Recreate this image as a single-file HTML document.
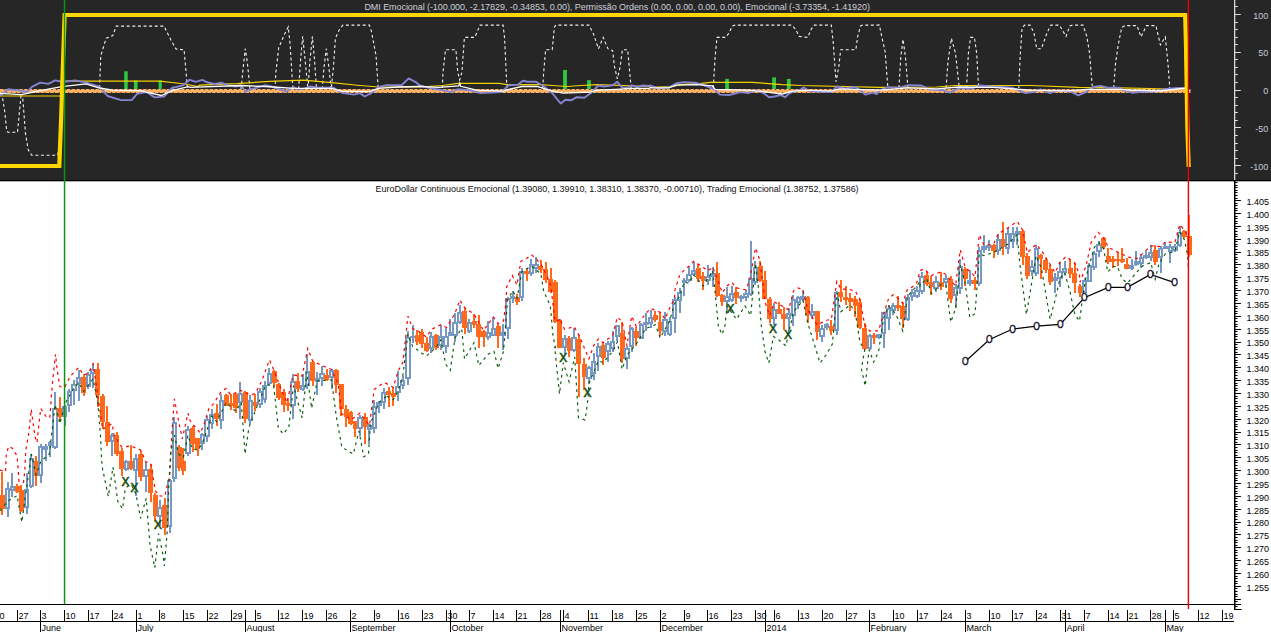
<!DOCTYPE html><html><head><meta charset="utf-8"><title>EuroDollar Continuous Emocional</title>
<style>html,body{margin:0;padding:0;background:#fff;overflow:hidden}svg{display:block}text{font-family:"Liberation Sans",Arial,sans-serif;font-size:9px}</style></head><body>
<svg width="1271" height="632" viewBox="0 0 1271 632">
<rect x="0" y="0" width="1271" height="632" fill="#ffffff"/>
<rect x="0" y="0" width="1271" height="180" fill="#262626"/>
<rect x="0" y="180" width="1271" height="1.3" fill="#000"/>
<polyline points="0.0,93.3 2.7,98.7 4.8,112.0 6.7,131.0 8.0,132.3 17.5,132.3 19.4,112.0 21.0,96.0 22.8,98.7 25.5,133.7 28.2,149.8 31.7,155.2 57.8,155.2 60.5,128.3 62.4,90.6" fill="none" stroke="#f0f0f0" stroke-width="1.1" stroke-dasharray="3 2.6"/>
<polyline points="99.5,88.0 100.8,55.7 106.2,38.2 112.9,35.5 116.1,26.1 164.0,26.1 170.7,39.6 176.0,49.0 184.1,49.8 186.0,71.8 187.4,88.0" fill="none" stroke="#f0f0f0" stroke-width="1.1" stroke-dasharray="3 2.6"/>
<polyline points="241.0,89.3 242.9,70.4 245.3,48.7 247.6,64.8 250.0,89.3" fill="none" stroke="#f0f0f0" stroke-width="1.1" stroke-dasharray="3 2.6"/>
<polyline points="275.0,89.3 275.9,72.3 278.7,47.8 284.4,34.5 288.2,27.0 290.1,44.0 292.9,89.3" fill="none" stroke="#f0f0f0" stroke-width="1.1" stroke-dasharray="3 2.6"/>
<polyline points="298.6,89.3 300.5,61.0 302.7,36.4 305.2,61.0 308.0,89.3 309.9,61.0 312.4,36.4 314.6,61.0 316.5,89.3" fill="none" stroke="#f0f0f0" stroke-width="1.1" stroke-dasharray="3 2.6"/>
<polyline points="322.2,89.3 324.1,66.6 326.3,48.7 328.8,66.6 331.2,89.3 333.5,66.6 335.4,38.3 340.1,28.0 343.0,25.1 369.4,25.1 371.3,30.8 376.0,55.3 378.3,89.3" fill="none" stroke="#f0f0f0" stroke-width="1.1" stroke-dasharray="3 2.6"/>
<polyline points="442.3,88.0 443.0,72.3 445.5,49.7 455.9,49.7 457.8,72.3 459.7,79.9 461.9,72.3 464.4,37.4 474.8,37.4 480.0,25.1 503.1,25.1 504.6,38.3 506.9,88.0" fill="none" stroke="#f0f0f0" stroke-width="1.1" stroke-dasharray="3 2.6"/>
<polyline points="542.7,88.0 543.7,72.3 545.6,49.7 552.2,49.7 554.4,27.0 556.0,25.1 589.0,25.1 593.7,34.5 598.4,48.7 603.2,37.4 607.9,48.7 612.6,50.6 614.5,66.6 617.3,78.9 620.2,66.6 622.4,49.7 627.7,49.7 629.2,66.6 631.1,88.0" fill="none" stroke="#f0f0f0" stroke-width="1.1" stroke-dasharray="3 2.6"/>
<polyline points="713.3,88.0 715.1,57.2 717.0,37.4 725.5,37.4 729.3,32.7 732.1,26.0 735.0,25.1 791.6,25.1 795.4,28.9 799.2,36.4 807.7,37.4 811.4,28.9 814.3,25.1 831.3,25.1 833.2,42.1 836.0,81.8 838.8,66.6 840.7,49.7 855.8,49.7 857.7,36.4 860.5,26.0 862.4,25.1 879.4,25.1 881.3,34.5 885.1,51.5 887.9,88.0" fill="none" stroke="#f0f0f0" stroke-width="1.1" stroke-dasharray="3 2.6"/>
<polyline points="898.9,88.0 900.8,57.2 903.0,39.3 905.5,57.2 907.9,88.0" fill="none" stroke="#f0f0f0" stroke-width="1.1" stroke-dasharray="3 2.6"/>
<polyline points="946.1,88.0 948.0,61.0 951.4,38.3 955.5,53.4 959.3,88.0" fill="none" stroke="#f0f0f0" stroke-width="1.1" stroke-dasharray="3 2.6"/>
<polyline points="966.5,88.0 968.4,53.4 970.6,37.4 974.4,37.4 976.7,53.4 978.6,88.0" fill="none" stroke="#f0f0f0" stroke-width="1.1" stroke-dasharray="3 2.6"/>
<polyline points="1018.8,88.0 1020.1,57.2 1022.0,28.9 1024.4,25.1 1030.1,25.1 1033.9,32.7 1036.7,48.7 1041.4,48.7 1047.1,32.7 1050.9,25.1 1059.4,25.1 1066.0,36.4 1069.8,26.0 1072.6,25.1 1083.0,25.1 1086.8,36.4 1089.6,53.4 1092.4,88.0" fill="none" stroke="#f0f0f0" stroke-width="1.1" stroke-dasharray="3 2.6"/>
<polyline points="1113.7,88.0 1115.5,63.8 1118.2,44.9 1121.7,27.5 1125.0,25.6 1137.0,25.6 1141.0,36.9 1146.5,25.6 1155.9,25.6 1160.4,44.9 1165.3,36.9 1168.0,63.8 1169.8,88.0" fill="none" stroke="#f0f0f0" stroke-width="1.1" stroke-dasharray="3 2.6"/>
<rect x="124.2" y="71.3" width="3.5" height="19.3" fill="#2fc93f"/>
<rect x="133.9" y="80.4" width="3.7" height="10.2" fill="#2fc93f"/>
<rect x="158.6" y="80.4" width="3.2" height="10.2" fill="#2fc93f"/>
<rect x="563.1" y="70.0" width="3.8" height="20.6" fill="#2fc93f"/>
<rect x="587.1" y="80.2" width="3.8" height="10.4" fill="#2fc93f"/>
<rect x="725.2" y="78.9" width="3.7" height="11.7" fill="#2fc93f"/>
<rect x="772.2" y="77.4" width="3.8" height="13.2" fill="#2fc93f"/>
<rect x="786.9" y="78.9" width="3.8" height="11.7" fill="#2fc93f"/>
<line x1="0" y1="91.1" x2="1190.5" y2="91.1" stroke="#ffb264" stroke-width="4"/>
<line x1="1.5" y1="92.7" x2="1190.5" y2="92.7" stroke="#262626" stroke-width="1.1" stroke-dasharray="1 3.76"/>
<line x1="3.6" y1="89.5" x2="1190.5" y2="89.5" stroke="#262626" stroke-width="1" stroke-dasharray="1.5 3.26" stroke-opacity="0.75"/>
<polyline points="0.0,96.0 60.5,96.0" fill="none" stroke="#f5d000" stroke-width="1.2"/>
<polyline points="65.0,81.2 160.0,81.2 185.0,84.0 198.0,86.5 199.4,85.2 237.2,83.6 269.3,81.4 303.3,80.2 331.6,82.7 359.9,85.5 378.8,87.0 419.4,87.0 420.0,87.0 442.7,85.5 457.8,83.3 499.3,83.3 506.9,84.6 540.8,84.6 552.2,85.5 567.3,86.5 580.5,85.5 597.5,84.6 649.4,86.5 650.0,87.4 672.7,86.5 680.2,84.6 699.1,83.6 710.4,82.3 752.0,82.3 782.2,84.6 801.1,85.5 879.4,87.4 880.0,87.4 936.6,87.0 955.5,85.5 1031.1,85.5 1078.3,87.4 1120.0,87.8 1150.0,88.5 1186.0,89.5" fill="none" stroke="#f5d000" stroke-width="1.2"/>
<polyline points="0.0,96.0 8.1,89.3 20.2,90.6 26.9,92.0 32.3,86.6 40.3,82.6 48.4,83.9 55.1,80.4 63.2,82.0 75.3,80.4 86.0,82.6 99.5,86.6 107.5,96.0 121.0,100.1 131.7,100.1 137.1,93.9 146.5,92.0 154.6,97.4 164.0,96.6 172.0,88.0 182.8,85.3 189.5,79.9 190.0,79.9 195.7,81.8 202.3,79.9 207.0,82.3 214.5,84.0 221.2,82.7 227.8,85.2 235.3,86.5 241.0,85.5 245.7,91.6 252.3,88.9 265.5,85.2 273.1,87.0 286.3,91.6 293.5,87.0 297.6,89.3 303.3,88.9 310.8,86.5 318.4,87.8 333.5,87.8 342.9,93.1 354.3,94.6 359.9,93.1 364.7,96.5 371.3,93.1 378.8,87.0 386.4,85.2 401.5,85.2 408.7,78.4 416.6,82.7 419.4,85.2 420.0,85.5 431.3,88.4 442.7,90.2 450.2,92.1 457.8,89.3 469.1,90.2 480.4,93.1 501.2,92.1 508.7,85.2 518.2,84.6 522.9,80.8 527.6,81.8 536.1,81.8 542.7,85.5 552.2,93.1 560.7,103.5 565.4,99.7 571.1,100.3 576.7,97.2 584.3,97.8 590.9,93.1 598.4,85.5 604.1,86.5 612.6,85.2 617.3,81.8 622.0,87.4 627.7,87.8 631.5,85.2 637.1,87.0 642.8,85.5 649.4,85.9 650.0,85.5 657.6,88.4 668.9,87.4 676.4,83.3 684.0,82.1 695.3,82.7 704.8,85.5 714.2,89.3 719.9,94.6 729.3,95.0 740.6,92.1 748.2,93.1 755.7,90.2 763.3,93.1 769.0,97.2 774.6,96.5 780.3,95.0 785.0,97.2 789.7,93.1 799.2,90.2 803.9,87.4 808.6,90.8 816.2,91.6 831.3,92.1 836.9,86.5 844.5,88.4 855.8,87.0 865.3,94.6 872.8,92.7 876.6,94.0 879.4,91.2 880.0,90.2 887.6,87.4 898.9,87.8 908.3,85.2 921.5,85.5 929.1,89.3 942.3,90.2 949.9,92.7 959.3,87.8 970.6,88.9 980.1,85.5 991.4,86.5 1012.2,87.8 1025.4,93.1 1032.9,92.1 1040.5,89.3 1049.9,93.1 1059.4,90.2 1070.7,91.6 1078.3,95.3 1085.8,92.1 1093.4,87.0 1100.9,85.9 1108.5,87.8 1120.0,87.8 1122.3,90.1 1133.0,92.8 1143.8,91.5 1154.5,91.5 1168.0,88.8 1178.7,88.0 1185.4,88.5 1190.0,90.6" fill="none" stroke="#8484d0" stroke-width="1.9" stroke-linejoin="round"/>
<polyline points="0.0,93.3 21.5,94.7 40.3,90.6 61.8,86.6 86.0,83.9 99.5,88.0 112.9,90.1 139.8,90.6 161.3,95.5 172.0,90.6 188.2,86.6 190.0,87.4 241.0,85.5 265.5,86.5 293.9,88.4 331.6,88.4 341.1,91.2 369.4,91.6 378.8,88.4 397.7,87.0 419.4,86.5 420.0,86.5 438.9,87.4 458.7,85.9 459.7,83.3 460.6,86.3 476.6,90.2 503.1,91.2 508.7,89.3 522.0,86.5 537.1,86.5 552.2,91.2 563.5,93.1 589.9,92.1 597.5,90.2 616.4,89.3 631.5,88.4 649.4,88.4 650.0,87.8 668.9,87.8 676.4,85.2 697.2,84.6 712.3,85.9 715.1,89.3 748.2,90.2 763.3,91.6 782.2,94.0 793.5,91.2 806.7,90.2 831.3,91.2 838.8,88.9 879.4,90.2 880.0,90.2 908.3,87.8 936.6,88.9 959.3,87.0 993.3,87.4 1031.1,90.2 1068.8,90.8 1087.7,89.3 1120.0,89.3 1130.0,90.0 1160.0,91.0 1186.0,88.0 1190.0,91.0" fill="none" stroke="#ffffff" stroke-width="1.3"/>
<polyline points="0.0,166.0 59.3,166.0 61.2,117.0 64.6,15.0 1185.2,15.0 1186.0,46.0 1187.4,128.0 1188.7,167.0" fill="none" stroke="#ffd700" stroke-width="4.2" stroke-linejoin="miter"/>
<rect x="1234" y="0" width="1.3" height="180" fill="#d8d8d8"/>
<rect x="1235" y="173" width="2.8" height="1" fill="#e0e0e0"/>
<rect x="1235" y="165" width="5.8" height="1" fill="#e0e0e0"/>
<rect x="1235" y="158" width="2.8" height="1" fill="#e0e0e0"/>
<rect x="1235" y="150" width="2.8" height="1" fill="#e0e0e0"/>
<rect x="1235" y="143" width="2.8" height="1" fill="#e0e0e0"/>
<rect x="1235" y="135" width="2.8" height="1" fill="#e0e0e0"/>
<rect x="1235" y="127" width="5.8" height="1" fill="#e0e0e0"/>
<rect x="1235" y="120" width="2.8" height="1" fill="#e0e0e0"/>
<rect x="1235" y="112" width="2.8" height="1" fill="#e0e0e0"/>
<rect x="1235" y="105" width="2.8" height="1" fill="#e0e0e0"/>
<rect x="1235" y="97" width="2.8" height="1" fill="#e0e0e0"/>
<rect x="1235" y="90" width="5.8" height="1" fill="#e0e0e0"/>
<rect x="1235" y="82" width="2.8" height="1" fill="#e0e0e0"/>
<rect x="1235" y="74" width="2.8" height="1" fill="#e0e0e0"/>
<rect x="1235" y="67" width="2.8" height="1" fill="#e0e0e0"/>
<rect x="1235" y="59" width="2.8" height="1" fill="#e0e0e0"/>
<rect x="1235" y="52" width="5.8" height="1" fill="#e0e0e0"/>
<rect x="1235" y="44" width="2.8" height="1" fill="#e0e0e0"/>
<rect x="1235" y="37" width="2.8" height="1" fill="#e0e0e0"/>
<rect x="1235" y="29" width="2.8" height="1" fill="#e0e0e0"/>
<rect x="1235" y="22" width="2.8" height="1" fill="#e0e0e0"/>
<rect x="1235" y="14" width="5.8" height="1" fill="#e0e0e0"/>
<rect x="1235" y="6" width="2.8" height="1" fill="#e0e0e0"/>
<text x="1268.3" y="18.6" text-anchor="end" fill="#c8ccd4">100</text>
<text x="1268.3" y="56.4" text-anchor="end" fill="#c8ccd4">50</text>
<text x="1268.3" y="94.2" text-anchor="end" fill="#c8ccd4">0</text>
<text x="1268.3" y="132.0" text-anchor="end" fill="#c8ccd4">-50</text>
<text x="1268.3" y="169.8" text-anchor="end" fill="#c8ccd4">-100</text>
<text x="364.4" y="10.1" fill="#cdd0d8" textLength="505.5" lengthAdjust="spacing">DMI Emocional (-100.000, -2.17829, -0.34853, 0.00), Permissão Ordens (0.00, 0.00, 0.00, 0.00), Emocional (-3.73354, -1.41920)</text>
<text x="375.6" y="192" fill="#101010" textLength="483" lengthAdjust="spacing">EuroDollar Continuous Emocional (1.39080, 1.39910, 1.38310, 1.38370, -0.00710), Trading Emocional (1.38752, 1.37586)</text>
<g shape-rendering="crispEdges">
<rect x="1.28" y="471.8" width="2" height="42.7" fill="#ff691e"/>
<rect x="-0.22" y="494.6" width="5" height="14.2" fill="#ff691e"/>
<rect x="6.60" y="482.3" width="2" height="35.1" fill="#7698c2"/>
<rect x="5.95" y="489.0" width="3.3" height="18.9" fill="#fff" stroke="#7698c2" stroke-width="2"/>
<rect x="11.35" y="472.8" width="2" height="23.7" fill="#7698c2"/>
<rect x="10.70" y="487.1" width="3.3" height="2.7" fill="#fff" stroke="#7698c2" stroke-width="2"/>
<rect x="16.09" y="484.2" width="2" height="8.5" fill="#ff691e"/>
<rect x="14.59" y="486.1" width="5" height="5.7" fill="#ff691e"/>
<rect x="20.46" y="485.1" width="2" height="26.6" fill="#ff691e"/>
<rect x="18.96" y="489.9" width="5" height="20.9" fill="#ff691e"/>
<rect x="25.59" y="472.8" width="2" height="40.8" fill="#7698c2"/>
<rect x="24.94" y="489.9" width="3.3" height="17.0" fill="#fff" stroke="#7698c2" stroke-width="2"/>
<rect x="30.34" y="453.8" width="2" height="34.2" fill="#7698c2"/>
<rect x="29.69" y="458.6" width="3.3" height="27.4" fill="#fff" stroke="#7698c2" stroke-width="2"/>
<rect x="35.09" y="455.7" width="2" height="30.4" fill="#ff691e"/>
<rect x="33.59" y="461.4" width="5" height="14.2" fill="#ff691e"/>
<rect x="39.84" y="443.5" width="2" height="39.5" fill="#7698c2"/>
<rect x="39.19" y="446.7" width="3.3" height="27.9" fill="#fff" stroke="#7698c2" stroke-width="2"/>
<rect x="44.58" y="443.5" width="2" height="17.5" fill="#7698c2"/>
<rect x="43.93" y="446.7" width="3.3" height="1.9" fill="#fff" stroke="#7698c2" stroke-width="2"/>
<rect x="49.33" y="440.7" width="2" height="16.3" fill="#7698c2"/>
<rect x="48.68" y="442.8" width="3.3" height="1.9" fill="#fff" stroke="#7698c2" stroke-width="2"/>
<rect x="54.08" y="392.0" width="2" height="57.0" fill="#7698c2"/>
<rect x="53.43" y="409.4" width="3.3" height="37.9" fill="#fff" stroke="#7698c2" stroke-width="2"/>
<rect x="58.83" y="397.0" width="2" height="24.7" fill="#ff691e"/>
<rect x="57.33" y="408.4" width="5" height="8.6" fill="#ff691e"/>
<rect x="63.58" y="404.6" width="2" height="20.9" fill="#7698c2"/>
<rect x="62.93" y="407.1" width="3.3" height="8.9" fill="#fff" stroke="#7698c2" stroke-width="2"/>
<rect x="68.33" y="389.4" width="2" height="22.6" fill="#7698c2"/>
<rect x="67.68" y="392.4" width="3.3" height="12.7" fill="#fff" stroke="#7698c2" stroke-width="2"/>
<rect x="73.07" y="380.0" width="2" height="24.6" fill="#7698c2"/>
<rect x="72.42" y="384.9" width="3.3" height="5.5" fill="#fff" stroke="#7698c2" stroke-width="2"/>
<rect x="77.82" y="370.4" width="2" height="30.4" fill="#7698c2"/>
<rect x="77.17" y="377.8" width="3.3" height="5.0" fill="#fff" stroke="#7698c2" stroke-width="2"/>
<rect x="82.57" y="374.0" width="2" height="22.0" fill="#ff691e"/>
<rect x="81.07" y="376.8" width="5" height="15.9" fill="#ff691e"/>
<rect x="87.32" y="372.0" width="2" height="17.0" fill="#7698c2"/>
<rect x="86.67" y="375.0" width="3.3" height="11.0" fill="#fff" stroke="#7698c2" stroke-width="2"/>
<rect x="92.07" y="363.7" width="2" height="24.7" fill="#7698c2"/>
<rect x="91.42" y="370.0" width="3.3" height="3.0" fill="#fff" stroke="#7698c2" stroke-width="2"/>
<rect x="96.82" y="362.8" width="2" height="43.7" fill="#ff691e"/>
<rect x="95.32" y="369.4" width="5" height="25.6" fill="#ff691e"/>
<rect x="101.56" y="394.0" width="2" height="35.0" fill="#ff691e"/>
<rect x="100.06" y="396.0" width="5" height="26.1" fill="#ff691e"/>
<rect x="106.31" y="405.5" width="2" height="40.5" fill="#ff691e"/>
<rect x="104.81" y="422.1" width="5" height="19.8" fill="#ff691e"/>
<rect x="111.44" y="433.0" width="2" height="23.0" fill="#7698c2"/>
<rect x="110.79" y="435.7" width="3.3" height="5.3" fill="#fff" stroke="#7698c2" stroke-width="2"/>
<rect x="115.81" y="432.0" width="2" height="24.0" fill="#ff691e"/>
<rect x="114.31" y="434.7" width="5" height="19.6" fill="#ff691e"/>
<rect x="120.56" y="448.0" width="2" height="27.6" fill="#ff691e"/>
<rect x="119.06" y="450.9" width="5" height="18.1" fill="#ff691e"/>
<rect x="125.31" y="460.0" width="2" height="11.0" fill="#7698c2"/>
<rect x="124.66" y="462.4" width="3.3" height="6.5" fill="#fff" stroke="#7698c2" stroke-width="2"/>
<rect x="130.05" y="444.5" width="2" height="25.5" fill="#ff691e"/>
<rect x="128.55" y="461.4" width="5" height="7.6" fill="#ff691e"/>
<rect x="134.80" y="454.0" width="2" height="41.6" fill="#7698c2"/>
<rect x="134.15" y="458.6" width="3.3" height="11.3" fill="#fff" stroke="#7698c2" stroke-width="2"/>
<rect x="139.55" y="451.0" width="2" height="30.0" fill="#ff691e"/>
<rect x="138.05" y="453.8" width="5" height="22.8" fill="#ff691e"/>
<rect x="144.87" y="462.0" width="2" height="30.0" fill="#7698c2"/>
<rect x="144.22" y="470.0" width="3.3" height="5.6" fill="#fff" stroke="#7698c2" stroke-width="2"/>
<rect x="149.62" y="464.0" width="2" height="38.0" fill="#ff691e"/>
<rect x="148.12" y="469.0" width="5" height="23.7" fill="#ff691e"/>
<rect x="154.37" y="492.7" width="2" height="29.3" fill="#ff691e"/>
<rect x="152.87" y="494.6" width="5" height="20.9" fill="#ff691e"/>
<rect x="159.11" y="500.0" width="2" height="26.0" fill="#7698c2"/>
<rect x="158.46" y="508.0" width="3.3" height="7.5" fill="#fff" stroke="#7698c2" stroke-width="2"/>
<rect x="163.86" y="497.5" width="2" height="37.0" fill="#ff691e"/>
<rect x="162.36" y="505.1" width="5" height="22.8" fill="#ff691e"/>
<rect x="168.61" y="479.4" width="2" height="53.2" fill="#7698c2"/>
<rect x="167.96" y="481.4" width="3.3" height="44.5" fill="#fff" stroke="#7698c2" stroke-width="2"/>
<rect x="173.36" y="417.0" width="2" height="65.0" fill="#7698c2"/>
<rect x="172.71" y="422.7" width="3.3" height="54.8" fill="#fff" stroke="#7698c2" stroke-width="2"/>
<rect x="178.11" y="445.4" width="2" height="25.6" fill="#ff691e"/>
<rect x="176.61" y="447.4" width="5" height="21.0" fill="#ff691e"/>
<rect x="182.29" y="448.0" width="2" height="26.7" fill="#ff691e"/>
<rect x="180.79" y="461.1" width="5" height="9.6" fill="#ff691e"/>
<rect x="187.03" y="425.5" width="2" height="30.5" fill="#7698c2"/>
<rect x="186.38" y="429.6" width="3.3" height="23.4" fill="#fff" stroke="#7698c2" stroke-width="2"/>
<rect x="191.85" y="425.5" width="2" height="26.6" fill="#ff691e"/>
<rect x="190.35" y="428.0" width="5" height="16.0" fill="#ff691e"/>
<rect x="196.60" y="437.8" width="2" height="18.0" fill="#ff691e"/>
<rect x="195.10" y="437.9" width="5" height="11.1" fill="#ff691e"/>
<rect x="201.35" y="433.1" width="2" height="17.1" fill="#7698c2"/>
<rect x="200.70" y="435.2" width="3.3" height="7.9" fill="#fff" stroke="#7698c2" stroke-width="2"/>
<rect x="206.09" y="416.0" width="2" height="25.6" fill="#7698c2"/>
<rect x="205.44" y="420.4" width="3.3" height="15.9" fill="#fff" stroke="#7698c2" stroke-width="2"/>
<rect x="210.84" y="409.3" width="2" height="19.9" fill="#7698c2"/>
<rect x="210.19" y="415.4" width="3.3" height="7.9" fill="#fff" stroke="#7698c2" stroke-width="2"/>
<rect x="215.59" y="403.6" width="2" height="22.8" fill="#ff691e"/>
<rect x="214.09" y="412.6" width="5" height="6.8" fill="#ff691e"/>
<rect x="220.34" y="394.1" width="2" height="35.1" fill="#7698c2"/>
<rect x="219.69" y="400.6" width="3.3" height="19.0" fill="#fff" stroke="#7698c2" stroke-width="2"/>
<rect x="225.09" y="394.1" width="2" height="11.4" fill="#ff691e"/>
<rect x="223.59" y="394.7" width="5" height="10.8" fill="#ff691e"/>
<rect x="229.84" y="394.1" width="2" height="16.1" fill="#ff691e"/>
<rect x="228.34" y="402.7" width="5" height="3.1" fill="#ff691e"/>
<rect x="234.58" y="393.2" width="2" height="19.9" fill="#ff691e"/>
<rect x="233.08" y="393.5" width="5" height="14.8" fill="#ff691e"/>
<rect x="239.33" y="381.8" width="2" height="37.0" fill="#7698c2"/>
<rect x="238.68" y="393.8" width="3.3" height="8.5" fill="#fff" stroke="#7698c2" stroke-width="2"/>
<rect x="244.46" y="391.3" width="2" height="31.3" fill="#ff691e"/>
<rect x="242.96" y="392.2" width="5" height="27.2" fill="#ff691e"/>
<rect x="249.40" y="395.1" width="2" height="28.5" fill="#7698c2"/>
<rect x="248.75" y="401.2" width="3.3" height="18.4" fill="#fff" stroke="#7698c2" stroke-width="2"/>
<rect x="254.15" y="394.1" width="2" height="17.1" fill="#ff691e"/>
<rect x="252.65" y="401.5" width="5" height="4.3" fill="#ff691e"/>
<rect x="258.90" y="388.4" width="2" height="19.9" fill="#7698c2"/>
<rect x="258.25" y="392.0" width="3.3" height="12.2" fill="#fff" stroke="#7698c2" stroke-width="2"/>
<rect x="263.64" y="380.8" width="2" height="21.8" fill="#7698c2"/>
<rect x="262.99" y="385.8" width="3.3" height="13.4" fill="#fff" stroke="#7698c2" stroke-width="2"/>
<rect x="268.39" y="367.5" width="2" height="18.0" fill="#7698c2"/>
<rect x="267.74" y="373.5" width="3.3" height="9.7" fill="#fff" stroke="#7698c2" stroke-width="2"/>
<rect x="273.14" y="370.4" width="2" height="16.1" fill="#ff691e"/>
<rect x="271.64" y="371.2" width="5" height="11.7" fill="#ff691e"/>
<rect x="277.89" y="382.7" width="2" height="17.1" fill="#ff691e"/>
<rect x="276.39" y="383.6" width="5" height="14.2" fill="#ff691e"/>
<rect x="282.64" y="389.4" width="2" height="22.8" fill="#ff691e"/>
<rect x="281.14" y="392.2" width="5" height="12.3" fill="#ff691e"/>
<rect x="287.39" y="398.9" width="2" height="12.3" fill="#ff691e"/>
<rect x="285.89" y="403.3" width="5" height="2.5" fill="#ff691e"/>
<rect x="292.13" y="374.2" width="2" height="44.6" fill="#7698c2"/>
<rect x="291.48" y="382.1" width="3.3" height="23.3" fill="#fff" stroke="#7698c2" stroke-width="2"/>
<rect x="296.88" y="373.2" width="2" height="19.0" fill="#ff691e"/>
<rect x="295.38" y="381.1" width="5" height="7.4" fill="#ff691e"/>
<rect x="301.63" y="374.2" width="2" height="17.1" fill="#7698c2"/>
<rect x="300.98" y="385.8" width="3.3" height="3.6" fill="#fff" stroke="#7698c2" stroke-width="2"/>
<rect x="306.38" y="354.2" width="2" height="35.1" fill="#7698c2"/>
<rect x="305.73" y="372.2" width="3.3" height="12.8" fill="#fff" stroke="#7698c2" stroke-width="2"/>
<rect x="311.51" y="360.9" width="2" height="24.7" fill="#ff691e"/>
<rect x="310.01" y="362.3" width="5" height="18.5" fill="#ff691e"/>
<rect x="316.26" y="372.3" width="2" height="22.8" fill="#7698c2"/>
<rect x="315.61" y="379.4" width="3.3" height="1.7" fill="#fff" stroke="#7698c2" stroke-width="2"/>
<rect x="321.00" y="365.6" width="2" height="19.9" fill="#7698c2"/>
<rect x="320.35" y="373.8" width="3.3" height="4.2" fill="#fff" stroke="#7698c2" stroke-width="2"/>
<rect x="325.75" y="368.5" width="2" height="12.3" fill="#ff691e"/>
<rect x="324.25" y="374.7" width="5" height="5.6" fill="#ff691e"/>
<rect x="330.50" y="369.4" width="2" height="19.9" fill="#7698c2"/>
<rect x="329.85" y="371.4" width="3.3" height="5.4" fill="#fff" stroke="#7698c2" stroke-width="2"/>
<rect x="335.25" y="369.4" width="2" height="23.7" fill="#ff691e"/>
<rect x="333.75" y="369.8" width="5" height="14.8" fill="#ff691e"/>
<rect x="340.38" y="383.7" width="2" height="32.3" fill="#ff691e"/>
<rect x="338.88" y="383.7" width="5" height="25.6" fill="#ff691e"/>
<rect x="345.13" y="404.6" width="2" height="22.8" fill="#ff691e"/>
<rect x="343.63" y="409.3" width="5" height="7.4" fill="#ff691e"/>
<rect x="349.87" y="411.2" width="2" height="14.2" fill="#ff691e"/>
<rect x="348.37" y="411.7" width="5" height="12.3" fill="#ff691e"/>
<rect x="354.24" y="420.7" width="2" height="16.1" fill="#ff691e"/>
<rect x="352.74" y="421.0" width="5" height="8.0" fill="#ff691e"/>
<rect x="358.99" y="415.0" width="2" height="20.9" fill="#7698c2"/>
<rect x="358.34" y="417.7" width="3.3" height="10.3" fill="#fff" stroke="#7698c2" stroke-width="2"/>
<rect x="364.12" y="413.1" width="2" height="30.4" fill="#ff691e"/>
<rect x="362.62" y="417.3" width="5" height="9.3" fill="#ff691e"/>
<rect x="368.49" y="423.6" width="2" height="19.9" fill="#7698c2"/>
<rect x="367.84" y="426.1" width="3.3" height="2.8" fill="#fff" stroke="#7698c2" stroke-width="2"/>
<rect x="373.24" y="399.8" width="2" height="33.2" fill="#7698c2"/>
<rect x="372.59" y="406.6" width="3.3" height="21.5" fill="#fff" stroke="#7698c2" stroke-width="2"/>
<rect x="377.98" y="400.8" width="2" height="12.3" fill="#7698c2"/>
<rect x="377.33" y="402.9" width="3.3" height="1.7" fill="#fff" stroke="#7698c2" stroke-width="2"/>
<rect x="382.73" y="387.5" width="2" height="21.8" fill="#7698c2"/>
<rect x="382.08" y="393.0" width="3.3" height="8.5" fill="#fff" stroke="#7698c2" stroke-width="2"/>
<rect x="387.93" y="387.4" width="2" height="19.9" fill="#ff691e"/>
<rect x="386.43" y="391.4" width="5" height="3.7" fill="#ff691e"/>
<rect x="392.30" y="387.4" width="2" height="19.0" fill="#ff691e"/>
<rect x="390.80" y="392.6" width="5" height="4.3" fill="#ff691e"/>
<rect x="397.04" y="371.2" width="2" height="29.4" fill="#7698c2"/>
<rect x="396.39" y="386.8" width="3.3" height="5.4" fill="#fff" stroke="#7698c2" stroke-width="2"/>
<rect x="401.79" y="376.0" width="2" height="13.3" fill="#7698c2"/>
<rect x="401.14" y="380.6" width="3.3" height="4.2" fill="#fff" stroke="#7698c2" stroke-width="2"/>
<rect x="406.92" y="331.3" width="2" height="54.1" fill="#7698c2"/>
<rect x="406.27" y="338.0" width="3.3" height="40.0" fill="#fff" stroke="#7698c2" stroke-width="2"/>
<rect x="411.67" y="324.7" width="2" height="18.0" fill="#7698c2"/>
<rect x="411.02" y="336.8" width="3.3" height="0.4" fill="#fff" stroke="#7698c2" stroke-width="2"/>
<rect x="416.04" y="330.4" width="2" height="14.2" fill="#ff691e"/>
<rect x="414.54" y="335.2" width="5" height="6.8" fill="#ff691e"/>
<rect x="420.79" y="328.5" width="2" height="19.0" fill="#ff691e"/>
<rect x="419.29" y="332.1" width="5" height="12.3" fill="#ff691e"/>
<rect x="425.53" y="337.0" width="2" height="15.2" fill="#ff691e"/>
<rect x="424.03" y="342.6" width="5" height="8.0" fill="#ff691e"/>
<rect x="430.28" y="332.3" width="2" height="20.9" fill="#7698c2"/>
<rect x="429.63" y="336.8" width="3.3" height="11.6" fill="#fff" stroke="#7698c2" stroke-width="2"/>
<rect x="435.03" y="334.2" width="2" height="16.1" fill="#ff691e"/>
<rect x="433.53" y="335.2" width="5" height="12.3" fill="#ff691e"/>
<rect x="439.78" y="324.7" width="2" height="25.6" fill="#7698c2"/>
<rect x="439.13" y="337.4" width="3.3" height="7.3" fill="#fff" stroke="#7698c2" stroke-width="2"/>
<rect x="444.91" y="327.5" width="2" height="25.6" fill="#7698c2"/>
<rect x="444.26" y="336.8" width="3.3" height="9.1" fill="#fff" stroke="#7698c2" stroke-width="2"/>
<rect x="449.28" y="319.0" width="2" height="17.1" fill="#7698c2"/>
<rect x="448.63" y="332.5" width="3.3" height="2.3" fill="#fff" stroke="#7698c2" stroke-width="2"/>
<rect x="454.02" y="313.3" width="2" height="28.5" fill="#7698c2"/>
<rect x="453.37" y="322.6" width="3.3" height="12.8" fill="#fff" stroke="#7698c2" stroke-width="2"/>
<rect x="458.77" y="304.7" width="2" height="19.0" fill="#7698c2"/>
<rect x="458.12" y="312.7" width="3.3" height="9.1" fill="#fff" stroke="#7698c2" stroke-width="2"/>
<rect x="463.52" y="307.6" width="2" height="26.6" fill="#ff691e"/>
<rect x="462.02" y="311.1" width="5" height="17.3" fill="#ff691e"/>
<rect x="468.27" y="319.0" width="2" height="14.2" fill="#7698c2"/>
<rect x="467.62" y="323.2" width="3.3" height="7.9" fill="#fff" stroke="#7698c2" stroke-width="2"/>
<rect x="473.02" y="314.2" width="2" height="14.2" fill="#ff691e"/>
<rect x="471.52" y="321.0" width="5" height="3.7" fill="#ff691e"/>
<rect x="477.77" y="315.2" width="2" height="32.3" fill="#ff691e"/>
<rect x="476.27" y="323.5" width="5" height="13.0" fill="#ff691e"/>
<rect x="482.51" y="330.4" width="2" height="16.1" fill="#ff691e"/>
<rect x="481.01" y="330.9" width="5" height="6.2" fill="#ff691e"/>
<rect x="487.26" y="320.9" width="2" height="19.0" fill="#7698c2"/>
<rect x="486.61" y="332.5" width="3.3" height="4.8" fill="#fff" stroke="#7698c2" stroke-width="2"/>
<rect x="492.39" y="317.1" width="2" height="19.0" fill="#7698c2"/>
<rect x="491.74" y="328.8" width="3.3" height="6.3" fill="#fff" stroke="#7698c2" stroke-width="2"/>
<rect x="497.14" y="323.7" width="2" height="24.7" fill="#ff691e"/>
<rect x="495.64" y="325.9" width="5" height="10.5" fill="#ff691e"/>
<rect x="501.89" y="323.7" width="2" height="26.6" fill="#7698c2"/>
<rect x="501.24" y="333.1" width="3.3" height="1.7" fill="#fff" stroke="#7698c2" stroke-width="2"/>
<rect x="506.92" y="296.5" width="2" height="42.7" fill="#7698c2"/>
<rect x="506.27" y="298.5" width="3.3" height="29.5" fill="#fff" stroke="#7698c2" stroke-width="2"/>
<rect x="511.67" y="290.8" width="2" height="12.3" fill="#7698c2"/>
<rect x="511.02" y="296.7" width="3.3" height="1.1" fill="#fff" stroke="#7698c2" stroke-width="2"/>
<rect x="516.04" y="293.6" width="2" height="11.4" fill="#ff691e"/>
<rect x="514.54" y="296.9" width="5" height="4.9" fill="#ff691e"/>
<rect x="520.79" y="268.0" width="2" height="33.2" fill="#7698c2"/>
<rect x="520.14" y="272.0" width="3.3" height="24.5" fill="#fff" stroke="#7698c2" stroke-width="2"/>
<rect x="525.53" y="268.0" width="2" height="13.3" fill="#ff691e"/>
<rect x="524.03" y="271.0" width="5" height="2.5" fill="#ff691e"/>
<rect x="530.28" y="259.4" width="2" height="16.1" fill="#7698c2"/>
<rect x="529.63" y="265.2" width="3.3" height="7.9" fill="#fff" stroke="#7698c2" stroke-width="2"/>
<rect x="535.03" y="256.6" width="2" height="16.1" fill="#7698c2"/>
<rect x="534.38" y="265.2" width="3.3" height="2.3" fill="#fff" stroke="#7698c2" stroke-width="2"/>
<rect x="539.78" y="260.4" width="2" height="12.3" fill="#ff691e"/>
<rect x="538.28" y="266.0" width="5" height="4.3" fill="#ff691e"/>
<rect x="544.91" y="262.3" width="2" height="20.9" fill="#ff691e"/>
<rect x="543.41" y="268.5" width="5" height="11.1" fill="#ff691e"/>
<rect x="549.66" y="268.0" width="2" height="24.7" fill="#ff691e"/>
<rect x="548.16" y="279.0" width="5" height="13.0" fill="#ff691e"/>
<rect x="554.40" y="280.3" width="2" height="42.7" fill="#ff691e"/>
<rect x="552.90" y="281.5" width="5" height="40.7" fill="#ff691e"/>
<rect x="558.88" y="319.0" width="2" height="29.4" fill="#ff691e"/>
<rect x="557.38" y="320.4" width="5" height="27.2" fill="#ff691e"/>
<rect x="563.62" y="335.1" width="2" height="19.0" fill="#7698c2"/>
<rect x="562.97" y="338.7" width="3.3" height="7.9" fill="#fff" stroke="#7698c2" stroke-width="2"/>
<rect x="568.37" y="336.1" width="2" height="20.9" fill="#ff691e"/>
<rect x="566.87" y="337.7" width="5" height="13.0" fill="#ff691e"/>
<rect x="573.12" y="327.5" width="2" height="24.7" fill="#7698c2"/>
<rect x="572.47" y="338.0" width="3.3" height="11.6" fill="#fff" stroke="#7698c2" stroke-width="2"/>
<rect x="577.87" y="335.1" width="2" height="61.7" fill="#ff691e"/>
<rect x="576.37" y="338.9" width="5" height="25.3" fill="#ff691e"/>
<rect x="583.19" y="357.9" width="2" height="32.3" fill="#ff691e"/>
<rect x="581.69" y="363.6" width="5" height="13.0" fill="#ff691e"/>
<rect x="587.94" y="365.5" width="2" height="18.0" fill="#7698c2"/>
<rect x="587.29" y="367.7" width="3.3" height="10.3" fill="#fff" stroke="#7698c2" stroke-width="2"/>
<rect x="592.68" y="353.2" width="2" height="26.6" fill="#7698c2"/>
<rect x="592.03" y="361.5" width="3.3" height="11.6" fill="#fff" stroke="#7698c2" stroke-width="2"/>
<rect x="597.43" y="342.7" width="2" height="28.5" fill="#7698c2"/>
<rect x="596.78" y="347.3" width="3.3" height="9.1" fill="#fff" stroke="#7698c2" stroke-width="2"/>
<rect x="602.18" y="342.7" width="2" height="21.8" fill="#ff691e"/>
<rect x="600.68" y="345.1" width="5" height="13.0" fill="#ff691e"/>
<rect x="606.93" y="340.8" width="2" height="20.9" fill="#7698c2"/>
<rect x="606.28" y="343.6" width="3.3" height="7.3" fill="#fff" stroke="#7698c2" stroke-width="2"/>
<rect x="611.68" y="331.3" width="2" height="20.9" fill="#7698c2"/>
<rect x="611.03" y="342.4" width="3.3" height="5.4" fill="#fff" stroke="#7698c2" stroke-width="2"/>
<rect x="616.43" y="324.7" width="2" height="16.1" fill="#7698c2"/>
<rect x="615.78" y="326.3" width="3.3" height="9.7" fill="#fff" stroke="#7698c2" stroke-width="2"/>
<rect x="621.17" y="321.8" width="2" height="40.8" fill="#ff691e"/>
<rect x="619.67" y="333.3" width="5" height="25.3" fill="#ff691e"/>
<rect x="625.92" y="345.6" width="2" height="23.7" fill="#7698c2"/>
<rect x="625.27" y="348.5" width="3.3" height="9.7" fill="#fff" stroke="#7698c2" stroke-width="2"/>
<rect x="630.67" y="326.6" width="2" height="25.6" fill="#7698c2"/>
<rect x="630.02" y="328.8" width="3.3" height="17.1" fill="#fff" stroke="#7698c2" stroke-width="2"/>
<rect x="635.42" y="326.6" width="2" height="19.0" fill="#ff691e"/>
<rect x="633.92" y="330.9" width="5" height="7.4" fill="#ff691e"/>
<rect x="640.17" y="322.8" width="2" height="16.1" fill="#7698c2"/>
<rect x="639.52" y="325.1" width="3.3" height="12.8" fill="#fff" stroke="#7698c2" stroke-width="2"/>
<rect x="644.92" y="313.3" width="2" height="18.0" fill="#7698c2"/>
<rect x="644.27" y="323.2" width="3.3" height="0.5" fill="#fff" stroke="#7698c2" stroke-width="2"/>
<rect x="649.66" y="310.4" width="2" height="17.1" fill="#7698c2"/>
<rect x="649.01" y="318.3" width="3.3" height="4.8" fill="#fff" stroke="#7698c2" stroke-width="2"/>
<rect x="654.41" y="311.4" width="2" height="10.4" fill="#ff691e"/>
<rect x="652.91" y="314.8" width="5" height="5.6" fill="#ff691e"/>
<rect x="659.16" y="312.3" width="2" height="23.7" fill="#ff691e"/>
<rect x="657.66" y="322.2" width="5" height="8.6" fill="#ff691e"/>
<rect x="663.91" y="312.3" width="2" height="23.7" fill="#7698c2"/>
<rect x="663.26" y="319.5" width="3.3" height="11.6" fill="#fff" stroke="#7698c2" stroke-width="2"/>
<rect x="668.66" y="317.1" width="2" height="19.0" fill="#7698c2"/>
<rect x="668.01" y="322.0" width="3.3" height="11.6" fill="#fff" stroke="#7698c2" stroke-width="2"/>
<rect x="673.75" y="296.5" width="2" height="36.1" fill="#7698c2"/>
<rect x="673.10" y="300.3" width="3.3" height="17.8" fill="#fff" stroke="#7698c2" stroke-width="2"/>
<rect x="678.50" y="287.9" width="2" height="24.7" fill="#7698c2"/>
<rect x="677.85" y="292.9" width="3.3" height="7.3" fill="#fff" stroke="#7698c2" stroke-width="2"/>
<rect x="683.25" y="278.4" width="2" height="18.0" fill="#7698c2"/>
<rect x="682.60" y="281.1" width="3.3" height="1.1" fill="#fff" stroke="#7698c2" stroke-width="2"/>
<rect x="687.99" y="266.1" width="2" height="16.1" fill="#7698c2"/>
<rect x="687.34" y="275.0" width="3.3" height="5.4" fill="#fff" stroke="#7698c2" stroke-width="2"/>
<rect x="692.74" y="262.3" width="2" height="13.3" fill="#7698c2"/>
<rect x="692.09" y="270.6" width="3.3" height="3.6" fill="#fff" stroke="#7698c2" stroke-width="2"/>
<rect x="697.49" y="264.2" width="2" height="18.0" fill="#ff691e"/>
<rect x="695.99" y="268.4" width="5" height="10.5" fill="#ff691e"/>
<rect x="702.24" y="271.8" width="2" height="18.0" fill="#ff691e"/>
<rect x="700.74" y="275.8" width="5" height="5.6" fill="#ff691e"/>
<rect x="706.99" y="265.1" width="2" height="19.9" fill="#7698c2"/>
<rect x="706.34" y="276.8" width="3.3" height="3.6" fill="#fff" stroke="#7698c2" stroke-width="2"/>
<rect x="711.74" y="267.0" width="2" height="19.9" fill="#7698c2"/>
<rect x="711.09" y="273.7" width="3.3" height="2.3" fill="#fff" stroke="#7698c2" stroke-width="2"/>
<rect x="716.48" y="262.3" width="2" height="35.1" fill="#ff691e"/>
<rect x="714.98" y="272.7" width="5" height="22.8" fill="#ff691e"/>
<rect x="721.23" y="293.6" width="2" height="12.3" fill="#ff691e"/>
<rect x="719.73" y="294.9" width="5" height="6.8" fill="#ff691e"/>
<rect x="725.98" y="287.0" width="2" height="24.7" fill="#7698c2"/>
<rect x="725.33" y="297.2" width="3.3" height="3.6" fill="#fff" stroke="#7698c2" stroke-width="2"/>
<rect x="730.73" y="286.0" width="2" height="16.1" fill="#7698c2"/>
<rect x="730.08" y="293.5" width="3.3" height="6.6" fill="#fff" stroke="#7698c2" stroke-width="2"/>
<rect x="735.48" y="287.0" width="2" height="17.1" fill="#ff691e"/>
<rect x="733.98" y="291.9" width="5" height="6.2" fill="#ff691e"/>
<rect x="740.23" y="294.6" width="2" height="7.6" fill="#7698c2"/>
<rect x="739.58" y="297.2" width="3.3" height="0.5" fill="#fff" stroke="#7698c2" stroke-width="2"/>
<rect x="744.97" y="289.8" width="2" height="11.4" fill="#7698c2"/>
<rect x="744.32" y="294.1" width="3.3" height="2.9" fill="#fff" stroke="#7698c2" stroke-width="2"/>
<rect x="749.72" y="241.4" width="2" height="54.1" fill="#7698c2"/>
<rect x="749.07" y="279.3" width="3.3" height="14.7" fill="#fff" stroke="#7698c2" stroke-width="2"/>
<rect x="754.47" y="261.3" width="2" height="23.7" fill="#7698c2"/>
<rect x="753.82" y="267.5" width="3.3" height="14.0" fill="#fff" stroke="#7698c2" stroke-width="2"/>
<rect x="759.22" y="261.3" width="2" height="20.9" fill="#ff691e"/>
<rect x="757.72" y="265.9" width="5" height="15.4" fill="#ff691e"/>
<rect x="763.97" y="270.8" width="2" height="28.5" fill="#ff691e"/>
<rect x="762.47" y="280.1" width="5" height="19.1" fill="#ff691e"/>
<rect x="768.72" y="297.4" width="2" height="25.6" fill="#ff691e"/>
<rect x="767.22" y="298.6" width="5" height="20.4" fill="#ff691e"/>
<rect x="773.46" y="303.1" width="2" height="21.8" fill="#7698c2"/>
<rect x="772.81" y="310.1" width="3.3" height="7.9" fill="#fff" stroke="#7698c2" stroke-width="2"/>
<rect x="778.21" y="302.2" width="2" height="11.4" fill="#ff691e"/>
<rect x="776.71" y="309.1" width="5" height="4.4" fill="#ff691e"/>
<rect x="782.96" y="306.9" width="2" height="22.8" fill="#ff691e"/>
<rect x="781.46" y="314.1" width="5" height="4.9" fill="#ff691e"/>
<rect x="787.71" y="307.9" width="2" height="24.7" fill="#7698c2"/>
<rect x="787.06" y="313.5" width="3.3" height="4.5" fill="#fff" stroke="#7698c2" stroke-width="2"/>
<rect x="792.46" y="294.6" width="2" height="31.3" fill="#7698c2"/>
<rect x="791.81" y="300.0" width="3.3" height="14.7" fill="#fff" stroke="#7698c2" stroke-width="2"/>
<rect x="797.21" y="295.5" width="2" height="13.3" fill="#7698c2"/>
<rect x="796.56" y="297.5" width="3.3" height="4.8" fill="#fff" stroke="#7698c2" stroke-width="2"/>
<rect x="801.95" y="289.8" width="2" height="11.4" fill="#7698c2"/>
<rect x="801.30" y="296.9" width="3.3" height="2.3" fill="#fff" stroke="#7698c2" stroke-width="2"/>
<rect x="806.70" y="295.5" width="2" height="27.5" fill="#ff691e"/>
<rect x="805.20" y="296.5" width="5" height="18.5" fill="#ff691e"/>
<rect x="811.45" y="304.1" width="2" height="15.2" fill="#7698c2"/>
<rect x="810.80" y="311.7" width="3.3" height="3.6" fill="#fff" stroke="#7698c2" stroke-width="2"/>
<rect x="816.20" y="310.7" width="2" height="29.4" fill="#ff691e"/>
<rect x="814.70" y="311.4" width="5" height="20.4" fill="#ff691e"/>
<rect x="820.95" y="325.0" width="2" height="17.1" fill="#7698c2"/>
<rect x="820.30" y="329.0" width="3.3" height="7.3" fill="#fff" stroke="#7698c2" stroke-width="2"/>
<rect x="825.70" y="323.1" width="2" height="6.6" fill="#7698c2"/>
<rect x="825.05" y="325.3" width="3.3" height="1.7" fill="#fff" stroke="#7698c2" stroke-width="2"/>
<rect x="830.44" y="320.2" width="2" height="15.2" fill="#ff691e"/>
<rect x="828.94" y="326.2" width="5" height="4.3" fill="#ff691e"/>
<rect x="835.76" y="290.8" width="2" height="44.6" fill="#7698c2"/>
<rect x="835.11" y="293.2" width="3.3" height="36.9" fill="#fff" stroke="#7698c2" stroke-width="2"/>
<rect x="839.94" y="280.3" width="2" height="21.8" fill="#ff691e"/>
<rect x="838.44" y="292.2" width="5" height="4.9" fill="#ff691e"/>
<rect x="844.69" y="286.0" width="2" height="19.0" fill="#ff691e"/>
<rect x="843.19" y="296.5" width="5" height="3.1" fill="#ff691e"/>
<rect x="849.44" y="292.7" width="2" height="18.0" fill="#ff691e"/>
<rect x="847.94" y="298.4" width="5" height="3.7" fill="#ff691e"/>
<rect x="854.19" y="295.5" width="2" height="21.8" fill="#ff691e"/>
<rect x="852.69" y="299.0" width="5" height="6.8" fill="#ff691e"/>
<rect x="858.93" y="299.3" width="2" height="29.4" fill="#ff691e"/>
<rect x="857.43" y="301.5" width="5" height="26.5" fill="#ff691e"/>
<rect x="863.68" y="323.1" width="2" height="27.0" fill="#ff691e"/>
<rect x="862.18" y="328.0" width="5" height="21.0" fill="#ff691e"/>
<rect x="868.56" y="333.6" width="2" height="16.1" fill="#7698c2"/>
<rect x="867.91" y="335.8" width="3.3" height="12.2" fill="#fff" stroke="#7698c2" stroke-width="2"/>
<rect x="873.31" y="332.7" width="2" height="11.4" fill="#ff691e"/>
<rect x="871.81" y="334.8" width="5" height="3.1" fill="#ff691e"/>
<rect x="878.06" y="333.6" width="2" height="5.7" fill="#7698c2"/>
<rect x="877.41" y="334.6" width="3.3" height="2.3" fill="#fff" stroke="#7698c2" stroke-width="2"/>
<rect x="882.81" y="311.8" width="2" height="36.1" fill="#7698c2"/>
<rect x="882.16" y="312.8" width="3.3" height="20.4" fill="#fff" stroke="#7698c2" stroke-width="2"/>
<rect x="887.56" y="305.1" width="2" height="24.7" fill="#7698c2"/>
<rect x="886.91" y="309.3" width="3.3" height="9.1" fill="#fff" stroke="#7698c2" stroke-width="2"/>
<rect x="892.30" y="303.2" width="2" height="11.4" fill="#7698c2"/>
<rect x="891.65" y="305.6" width="3.3" height="4.2" fill="#fff" stroke="#7698c2" stroke-width="2"/>
<rect x="897.05" y="295.6" width="2" height="15.2" fill="#ff691e"/>
<rect x="895.55" y="304.6" width="5" height="3.1" fill="#ff691e"/>
<rect x="901.80" y="303.2" width="2" height="24.7" fill="#ff691e"/>
<rect x="900.30" y="306.4" width="5" height="12.3" fill="#ff691e"/>
<rect x="906.55" y="293.7" width="2" height="27.5" fill="#7698c2"/>
<rect x="905.90" y="297.5" width="3.3" height="21.5" fill="#fff" stroke="#7698c2" stroke-width="2"/>
<rect x="911.30" y="289.0" width="2" height="12.3" fill="#7698c2"/>
<rect x="910.65" y="292.6" width="3.3" height="2.9" fill="#fff" stroke="#7698c2" stroke-width="2"/>
<rect x="916.05" y="286.1" width="2" height="11.4" fill="#7698c2"/>
<rect x="915.40" y="290.8" width="3.3" height="4.8" fill="#fff" stroke="#7698c2" stroke-width="2"/>
<rect x="920.90" y="271.7" width="2" height="21.8" fill="#7698c2"/>
<rect x="920.25" y="276.6" width="3.3" height="14.0" fill="#fff" stroke="#7698c2" stroke-width="2"/>
<rect x="925.65" y="271.7" width="2" height="14.2" fill="#ff691e"/>
<rect x="924.15" y="274.9" width="5" height="9.3" fill="#ff691e"/>
<rect x="930.40" y="275.5" width="2" height="19.9" fill="#ff691e"/>
<rect x="928.90" y="282.3" width="5" height="4.9" fill="#ff691e"/>
<rect x="935.14" y="275.5" width="2" height="16.1" fill="#7698c2"/>
<rect x="934.49" y="281.5" width="3.3" height="6.6" fill="#fff" stroke="#7698c2" stroke-width="2"/>
<rect x="940.27" y="271.7" width="2" height="18.0" fill="#ff691e"/>
<rect x="938.77" y="282.3" width="5" height="4.9" fill="#ff691e"/>
<rect x="945.02" y="274.6" width="2" height="12.3" fill="#7698c2"/>
<rect x="944.37" y="279.0" width="3.3" height="2.9" fill="#fff" stroke="#7698c2" stroke-width="2"/>
<rect x="949.77" y="275.5" width="2" height="27.5" fill="#ff691e"/>
<rect x="948.27" y="278.6" width="5" height="20.4" fill="#ff691e"/>
<rect x="954.52" y="284.1" width="2" height="23.7" fill="#7698c2"/>
<rect x="953.87" y="288.3" width="3.3" height="6.6" fill="#fff" stroke="#7698c2" stroke-width="2"/>
<rect x="959.27" y="259.4" width="2" height="34.2" fill="#7698c2"/>
<rect x="958.62" y="267.3" width="3.3" height="20.8" fill="#fff" stroke="#7698c2" stroke-width="2"/>
<rect x="964.01" y="267.0" width="2" height="19.0" fill="#ff691e"/>
<rect x="962.51" y="269.4" width="5" height="9.9" fill="#ff691e"/>
<rect x="968.76" y="269.8" width="2" height="16.1" fill="#7698c2"/>
<rect x="968.11" y="280.9" width="3.3" height="1.7" fill="#fff" stroke="#7698c2" stroke-width="2"/>
<rect x="973.51" y="276.5" width="2" height="13.3" fill="#ff691e"/>
<rect x="972.01" y="279.9" width="5" height="3.7" fill="#ff691e"/>
<rect x="978.26" y="247.0" width="2" height="38.9" fill="#7698c2"/>
<rect x="977.61" y="250.6" width="3.3" height="32.6" fill="#fff" stroke="#7698c2" stroke-width="2"/>
<rect x="983.01" y="234.7" width="2" height="18.0" fill="#7698c2"/>
<rect x="982.36" y="246.9" width="3.3" height="2.3" fill="#fff" stroke="#7698c2" stroke-width="2"/>
<rect x="987.76" y="240.4" width="2" height="10.4" fill="#7698c2"/>
<rect x="987.11" y="246.3" width="3.3" height="0.5" fill="#fff" stroke="#7698c2" stroke-width="2"/>
<rect x="992.50" y="244.2" width="2" height="13.3" fill="#ff691e"/>
<rect x="991.00" y="245.3" width="5" height="5.6" fill="#ff691e"/>
<rect x="997.25" y="233.7" width="2" height="20.9" fill="#7698c2"/>
<rect x="996.60" y="240.1" width="3.3" height="9.7" fill="#fff" stroke="#7698c2" stroke-width="2"/>
<rect x="1002.00" y="222.3" width="2" height="32.3" fill="#ff691e"/>
<rect x="1000.50" y="238.5" width="5" height="8.0" fill="#ff691e"/>
<rect x="1006.75" y="228.0" width="2" height="25.6" fill="#7698c2"/>
<rect x="1006.10" y="234.0" width="3.3" height="14.0" fill="#fff" stroke="#7698c2" stroke-width="2"/>
<rect x="1011.50" y="227.1" width="2" height="20.9" fill="#7698c2"/>
<rect x="1010.85" y="234.0" width="3.3" height="7.3" fill="#fff" stroke="#7698c2" stroke-width="2"/>
<rect x="1016.25" y="227.1" width="2" height="18.0" fill="#7698c2"/>
<rect x="1015.60" y="231.5" width="3.3" height="2.3" fill="#fff" stroke="#7698c2" stroke-width="2"/>
<rect x="1021.56" y="229.9" width="2" height="35.1" fill="#ff691e"/>
<rect x="1020.06" y="230.5" width="5" height="26.5" fill="#ff691e"/>
<rect x="1026.31" y="252.7" width="2" height="26.6" fill="#ff691e"/>
<rect x="1024.81" y="255.8" width="5" height="19.8" fill="#ff691e"/>
<rect x="1031.06" y="260.3" width="2" height="16.1" fill="#7698c2"/>
<rect x="1030.41" y="267.3" width="3.3" height="3.6" fill="#fff" stroke="#7698c2" stroke-width="2"/>
<rect x="1035.24" y="245.1" width="2" height="31.3" fill="#7698c2"/>
<rect x="1034.59" y="248.8" width="3.3" height="23.9" fill="#fff" stroke="#7698c2" stroke-width="2"/>
<rect x="1039.99" y="253.7" width="2" height="25.6" fill="#ff691e"/>
<rect x="1038.49" y="254.6" width="5" height="4.3" fill="#ff691e"/>
<rect x="1044.74" y="257.5" width="2" height="15.2" fill="#ff691e"/>
<rect x="1043.24" y="259.6" width="5" height="10.5" fill="#ff691e"/>
<rect x="1049.48" y="265.1" width="2" height="19.9" fill="#ff691e"/>
<rect x="1047.98" y="269.4" width="5" height="12.3" fill="#ff691e"/>
<rect x="1054.23" y="272.7" width="2" height="19.9" fill="#7698c2"/>
<rect x="1053.58" y="277.9" width="3.3" height="2.3" fill="#fff" stroke="#7698c2" stroke-width="2"/>
<rect x="1058.98" y="262.2" width="2" height="24.7" fill="#7698c2"/>
<rect x="1058.33" y="271.7" width="3.3" height="6.6" fill="#fff" stroke="#7698c2" stroke-width="2"/>
<rect x="1063.73" y="261.3" width="2" height="13.3" fill="#7698c2"/>
<rect x="1063.08" y="268.6" width="3.3" height="3.6" fill="#fff" stroke="#7698c2" stroke-width="2"/>
<rect x="1069.05" y="259.4" width="2" height="19.0" fill="#ff691e"/>
<rect x="1067.55" y="267.6" width="5" height="6.8" fill="#ff691e"/>
<rect x="1073.80" y="263.2" width="2" height="29.4" fill="#ff691e"/>
<rect x="1072.30" y="273.1" width="5" height="9.9" fill="#ff691e"/>
<rect x="1079.00" y="283.9" width="2" height="12.7" fill="#ff691e"/>
<rect x="1077.50" y="285.5" width="5" height="7.4" fill="#ff691e"/>
<rect x="1083.75" y="277.5" width="2" height="15.8" fill="#7698c2"/>
<rect x="1083.10" y="280.9" width="3.3" height="11.0" fill="#fff" stroke="#7698c2" stroke-width="2"/>
<rect x="1088.49" y="262.5" width="2" height="19.0" fill="#7698c2"/>
<rect x="1087.84" y="266.1" width="3.3" height="14.4" fill="#fff" stroke="#7698c2" stroke-width="2"/>
<rect x="1093.24" y="250.6" width="2" height="19.8" fill="#7698c2"/>
<rect x="1092.59" y="254.4" width="3.3" height="12.2" fill="#fff" stroke="#7698c2" stroke-width="2"/>
<rect x="1097.99" y="241.1" width="2" height="15.8" fill="#7698c2"/>
<rect x="1097.34" y="245.1" width="3.3" height="5.4" fill="#fff" stroke="#7698c2" stroke-width="2"/>
<rect x="1102.73" y="237.2" width="2" height="11.9" fill="#ff691e"/>
<rect x="1101.23" y="238.0" width="5" height="8.6" fill="#ff691e"/>
<rect x="1107.48" y="248.3" width="2" height="15.8" fill="#ff691e"/>
<rect x="1105.98" y="255.9" width="5" height="5.6" fill="#ff691e"/>
<rect x="1111.91" y="256.2" width="2" height="11.9" fill="#ff691e"/>
<rect x="1110.41" y="259.0" width="5" height="3.1" fill="#ff691e"/>
<rect x="1116.50" y="252.2" width="2" height="13.4" fill="#ff691e"/>
<rect x="1115.00" y="259.0" width="5" height="1.9" fill="#ff691e"/>
<rect x="1121.25" y="248.3" width="2" height="14.2" fill="#ff691e"/>
<rect x="1119.75" y="259.0" width="5" height="3.1" fill="#ff691e"/>
<rect x="1125.99" y="257.8" width="2" height="11.1" fill="#ff691e"/>
<rect x="1124.49" y="263.9" width="5" height="4.9" fill="#ff691e"/>
<rect x="1130.74" y="259.3" width="2" height="11.1" fill="#7698c2"/>
<rect x="1130.09" y="265.5" width="3.3" height="2.3" fill="#fff" stroke="#7698c2" stroke-width="2"/>
<rect x="1135.49" y="251.4" width="2" height="15.0" fill="#7698c2"/>
<rect x="1134.84" y="261.8" width="3.3" height="2.3" fill="#fff" stroke="#7698c2" stroke-width="2"/>
<rect x="1140.23" y="253.8" width="2" height="14.2" fill="#7698c2"/>
<rect x="1139.58" y="257.5" width="3.3" height="5.4" fill="#fff" stroke="#7698c2" stroke-width="2"/>
<rect x="1144.98" y="251.4" width="2" height="7.9" fill="#7698c2"/>
<rect x="1144.33" y="255.6" width="3.3" height="1.7" fill="#fff" stroke="#7698c2" stroke-width="2"/>
<rect x="1149.73" y="245.1" width="2" height="15.8" fill="#7698c2"/>
<rect x="1149.08" y="252.5" width="3.3" height="4.8" fill="#fff" stroke="#7698c2" stroke-width="2"/>
<rect x="1154.47" y="245.1" width="2" height="19.8" fill="#ff691e"/>
<rect x="1152.97" y="250.3" width="5" height="11.7" fill="#ff691e"/>
<rect x="1159.70" y="245.9" width="2" height="26.9" fill="#7698c2"/>
<rect x="1159.05" y="248.8" width="3.3" height="7.9" fill="#fff" stroke="#7698c2" stroke-width="2"/>
<rect x="1164.44" y="241.9" width="2" height="7.1" fill="#7698c2"/>
<rect x="1163.79" y="246.9" width="3.3" height="0.8" fill="#fff" stroke="#7698c2" stroke-width="2"/>
<rect x="1169.19" y="244.3" width="2" height="18.2" fill="#7698c2"/>
<rect x="1168.54" y="246.9" width="3.3" height="4.3" fill="#fff" stroke="#7698c2" stroke-width="2"/>
<rect x="1173.94" y="244.3" width="2" height="7.9" fill="#7698c2"/>
<rect x="1173.29" y="246.9" width="3.3" height="3.5" fill="#fff" stroke="#7698c2" stroke-width="2"/>
<rect x="1178.68" y="226.1" width="2" height="20.6" fill="#7698c2"/>
<rect x="1178.03" y="232.6" width="3.3" height="12.2" fill="#fff" stroke="#7698c2" stroke-width="2"/>
<rect x="1183.43" y="230.1" width="2" height="7.9" fill="#ff691e"/>
<rect x="1181.93" y="230.9" width="5" height="6.3" fill="#ff691e"/>
<rect x="1188.18" y="215.0" width="2" height="41.9" fill="#ff691e"/>
<rect x="1186.68" y="236.4" width="5" height="19.0" fill="#ff691e"/>
</g>
<polyline points="0.0,470.0 5.5,472.0 6.3,455.0 8.5,446.4 12.3,448.3 17.1,455.9 18.2,470.0 19.0,482.0 23.5,482.3 24.7,472.0 25.8,450.0 28.5,435.0 31.3,409.3 33.3,424.7 35.1,437.0 37.0,442.6 39.5,418.5 40.8,408.4 45.6,416.0 49.8,417.9 52.2,385.6 55.5,354.2 57.0,368.5 59.8,386.5 64.6,387.5 70.3,376.1 78.8,367.5 83.6,375.1 88.3,373.2 93.1,363.7 97.8,395.1 102.6,429.3 112.1,423.6 114.0,435.0 121.6,447.0 131.0,446.0 140.5,450.0 146.0,462.0 150.6,463.0 155.4,491.0 160.0,496.0 165.0,496.0 168.0,482.0 169.6,478.0 171.0,450.0 172.0,431.0 174.4,398.9 177.6,416.0 182.3,438.8 188.0,413.1 190.0,420.7 193.8,425.5 200.4,433.1 204.2,423.6 209.0,408.4 213.7,403.6 221.3,391.3 226.1,388.4 230.8,395.1 240.3,390.3 250.8,395.1 255.5,393.2 262.2,379.9 269.4,359.9 274.1,370.4 278.9,383.7 286.9,402.7 293.1,375.1 302.1,376.1 307.8,348.5 312.5,360.9 322.0,365.6 331.5,369.4 338.1,383.7 341.9,414.1 351.4,419.8 360.0,413.1 369.5,425.5 374.2,389.4 383.7,382.7 384.7,382.6 393.3,387.4 398.0,371.2 402.8,362.7 405.6,338.0 407.9,316.1 412.7,328.5 417.0,330.4 426.5,337.0 431.3,329.4 440.8,324.7 446.5,327.5 455.0,313.3 459.8,300.0 464.5,307.6 474.0,314.2 483.5,330.4 493.4,317.1 498.1,323.7 503.5,320.9 506.3,300.0 506.6,287.0 512.3,275.6 517.0,285.1 520.8,261.3 526.5,258.5 531.3,254.7 536.0,258.5 540.8,264.2 545.9,273.7 550.7,285.1 555.0,321.2 560.7,319.3 559.9,319.0 564.6,329.4 574.1,326.6 578.9,335.1 588.9,358.9 593.7,345.6 598.4,338.9 603.2,342.7 612.7,335.1 617.4,317.1 622.2,321.8 626.9,345.6 631.7,316.1 636.4,326.6 645.9,313.3 650.7,308.5 660.2,312.3 664.9,319.0 671.6,303.8 674.4,300.0 674.7,290.8 679.5,275.6 684.2,269.9 689.0,266.1 693.7,261.3 698.5,264.2 708.0,270.8 712.7,267.0 717.5,279.4 722.2,292.7 727.0,286.0 731.7,282.2 736.5,287.9 746.0,289.8 749.8,279.4 755.5,248.0 760.2,261.3 765.0,302.2 769.7,315.5 774.5,302.2 784.0,306.9 788.7,309.8 793.5,290.8 798.2,287.9 803.0,289.8 807.7,309.8 817.2,325.0 826.7,320.2 831.4,319.3 836.8,281.3 840.9,288.9 850.4,289.8 855.2,290.8 859.9,299.3 864.7,325.0 869.6,330.8 878.5,330.8 883.8,313.7 888.6,298.5 893.3,294.7 898.1,298.5 902.8,303.2 907.5,289.0 912.3,287.1 917.0,282.3 920.0,270.8 923.8,268.9 931.4,275.5 941.3,271.7 946.0,274.6 955.5,286.0 960.3,249.9 965.0,267.0 975.1,276.5 979.3,234.7 984.0,245.1 993.5,244.2 998.3,233.7 1007.7,228.0 1017.2,221.4 1022.6,229.9 1027.3,252.7 1036.2,244.2 1041.6,250.8 1050.5,265.1 1055.2,272.7 1060.0,262.2 1066.2,256.5 1074.8,263.2 1079.5,274.6 1080.0,282.3 1086.3,264.9 1091.1,242.7 1098.2,232.4 1103.7,238.0 1108.5,247.5 1118.0,252.2 1127.5,257.0 1137.0,258.5 1143.3,253.0 1150.7,245.9 1160.7,246.7 1165.4,241.9 1174.9,242.7 1179.7,224.5 1184.4,230.1 1189.2,238.0" fill="none" stroke="#ff0000" stroke-width="1.2" stroke-dasharray="3 3.8"/>
<polyline points="0.0,510.8 7.6,501.3 17.1,495.6 21.8,522.2 26.6,488.0 31.3,453.8 36.1,474.7 40.8,461.4 49.4,453.8 55.1,404.6 59.8,423.6 65.5,402.7 74.1,387.5 78.8,382.7 83.6,391.3 93.1,378.9 97.8,402.7 100.7,438.8 101.6,460.0 102.6,469.0 108.3,496.5 113.0,467.1 117.8,501.3 122.5,508.9 125.4,488.0 131.1,484.2 135.8,493.7 140.6,518.4 146.2,498.4 150.0,545.0 154.8,567.8 158.6,533.6 163.3,556.4 164.3,565.9 167.1,533.6 169.0,480.4 170.9,450.0 174.4,435.0 178.5,454.0 183.3,457.8 188.0,435.0 191.9,448.3 197.6,450.2 202.3,443.5 211.8,416.0 216.6,421.7 226.1,402.7 235.6,411.2 241.3,402.7 245.1,454.0 248.9,427.4 255.5,410.3 266.0,384.6 273.6,385.6 278.3,427.4 283.1,434.0 288.8,427.4 293.5,385.6 302.1,417.9 306.8,372.3 311.6,408.4 317.3,380.8 331.5,379.9 336.2,416.0 341.9,447.3 353.3,454.0 359.0,431.2 363.8,456.8 368.5,454.0 370.4,423.6 379.0,402.7 385.6,397.0 384.7,395.0 393.3,399.7 398.0,391.2 402.8,376.0 407.9,334.2 412.7,346.5 421.8,353.2 426.5,356.0 436.0,347.5 440.8,339.9 445.9,364.6 450.3,370.3 455.0,338.0 461.7,328.5 464.5,358.9 474.0,342.7 478.8,365.5 488.3,354.1 494.0,351.3 498.1,368.4 503.5,351.3 507.6,300.0 512.7,290.8 517.0,298.4 521.8,271.8 531.3,266.1 540.8,273.7 543.6,290.8 550.3,306.0 553.1,336.4 555.4,347.8 554.7,347.5 559.5,394.0 563.3,362.7 569.0,381.7 574.7,357.0 578.5,417.8 585.1,420.0 588.0,398.8 588.9,383.6 598.4,360.8 603.2,362.7 612.7,351.3 617.4,341.8 622.2,369.3 626.9,355.1 636.4,343.7 645.9,328.5 655.4,324.7 660.2,338.0 669.7,320.9 674.4,303.8 679.5,296.5 684.2,282.2 689.0,283.2 693.7,274.6 703.2,286.0 712.7,270.8 715.6,296.5 718.4,326.9 722.2,334.5 725.1,325.0 727.0,306.0 736.5,319.3 745.0,306.0 750.7,315.5 755.5,263.2 758.3,287.0 761.2,325.0 765.0,351.6 768.8,363.0 773.5,336.4 779.2,340.2 785.9,345.9 793.5,311.7 803.0,300.3 807.7,323.1 814.3,344.0 820.0,363.0 825.7,355.4 832.4,344.0 836.8,292.7 840.9,311.7 850.4,305.0 855.2,311.7 859.9,342.1 864.7,350.0 861.4,368.8 865.2,385.9 869.0,349.8 873.7,362.1 878.5,351.7 883.8,317.5 888.6,306.1 895.6,313.7 902.8,330.8 907.5,296.6 920.3,281.4 920.0,286.0 926.6,278.4 931.4,293.6 941.3,284.1 946.0,286.0 950.8,322.1 955.5,308.8 960.3,265.1 965.0,282.2 969.8,317.3 975.1,313.5 979.3,253.7 984.0,255.6 993.5,252.7 1007.7,244.2 1017.2,234.7 1019.7,263.2 1026.4,314.5 1032.1,280.3 1036.2,255.6 1041.6,268.9 1050.1,319.2 1055.2,299.3 1060.0,278.4 1064.7,272.7 1070.0,291.7 1074.8,314.5 1079.5,321.1 1083.2,293.4 1086.3,275.9 1094.2,247.5 1099.0,242.7 1103.7,249.1 1107.7,272.0 1112.9,266.5 1117.5,266.5 1122.2,279.1 1127.5,283.1 1132.2,277.5 1141.7,266.5 1150.7,262.5 1155.2,279.1 1159.1,263.3 1165.4,253.8 1174.9,251.4 1179.7,231.6 1184.4,239.6 1187.6,255.4 1188.4,268.0" fill="none" stroke="#075a07" stroke-width="1.15" stroke-dasharray="2.8 3.8"/>
<text x="124.7" y="485.6" text-anchor="middle" fill="#f0a818" fill-opacity="0.5" style="font-size:12px">X</text>
<text x="126.0" y="485.6" text-anchor="middle" fill="#30a0d0" fill-opacity="0.3" style="font-size:12px">X</text>
<text x="125.4" y="485.6" text-anchor="middle" fill="#0a480a" stroke="#0a480a" stroke-width="0.45" style="font-size:12px">X</text>
<text x="133.8" y="491.7" text-anchor="middle" fill="#f0a818" fill-opacity="0.5" style="font-size:12px">X</text>
<text x="135.1" y="491.7" text-anchor="middle" fill="#30a0d0" fill-opacity="0.3" style="font-size:12px">X</text>
<text x="134.5" y="491.7" text-anchor="middle" fill="#0a480a" stroke="#0a480a" stroke-width="0.45" style="font-size:12px">X</text>
<text x="157.3" y="529.3" text-anchor="middle" fill="#f0a818" fill-opacity="0.5" style="font-size:12px">X</text>
<text x="158.6" y="529.3" text-anchor="middle" fill="#30a0d0" fill-opacity="0.3" style="font-size:12px">X</text>
<text x="158.0" y="529.3" text-anchor="middle" fill="#0a480a" stroke="#0a480a" stroke-width="0.45" style="font-size:12px">X</text>
<text x="562.6" y="361.8" text-anchor="middle" fill="#f0a818" fill-opacity="0.5" style="font-size:12px">X</text>
<text x="563.9" y="361.8" text-anchor="middle" fill="#30a0d0" fill-opacity="0.3" style="font-size:12px">X</text>
<text x="563.3" y="361.8" text-anchor="middle" fill="#0a480a" stroke="#0a480a" stroke-width="0.45" style="font-size:12px">X</text>
<text x="586.7" y="396.8" text-anchor="middle" fill="#f0a818" fill-opacity="0.5" style="font-size:12px">X</text>
<text x="588.0" y="396.8" text-anchor="middle" fill="#30a0d0" fill-opacity="0.3" style="font-size:12px">X</text>
<text x="587.4" y="396.8" text-anchor="middle" fill="#0a480a" stroke="#0a480a" stroke-width="0.45" style="font-size:12px">X</text>
<text x="729.7" y="312.6" text-anchor="middle" fill="#f0a818" fill-opacity="0.5" style="font-size:12px">X</text>
<text x="731.0" y="312.6" text-anchor="middle" fill="#30a0d0" fill-opacity="0.3" style="font-size:12px">X</text>
<text x="730.4" y="312.6" text-anchor="middle" fill="#0a480a" stroke="#0a480a" stroke-width="0.45" style="font-size:12px">X</text>
<text x="772.4" y="332.5" text-anchor="middle" fill="#f0a818" fill-opacity="0.5" style="font-size:12px">X</text>
<text x="773.7" y="332.5" text-anchor="middle" fill="#30a0d0" fill-opacity="0.3" style="font-size:12px">X</text>
<text x="773.1" y="332.5" text-anchor="middle" fill="#0a480a" stroke="#0a480a" stroke-width="0.45" style="font-size:12px">X</text>
<text x="787.4" y="339.3" text-anchor="middle" fill="#f0a818" fill-opacity="0.5" style="font-size:12px">X</text>
<text x="788.7" y="339.3" text-anchor="middle" fill="#30a0d0" fill-opacity="0.3" style="font-size:12px">X</text>
<text x="788.1" y="339.3" text-anchor="middle" fill="#0a480a" stroke="#0a480a" stroke-width="0.45" style="font-size:12px">X</text>
<polyline points="965.3,361.5 989.2,339.7 1012.5,329.0 1036.5,326.2 1060.2,324.3 1084.3,297.8 1108.3,287.4 1127.5,287.3 1150.4,274.4 1174.5,282.6" fill="none" stroke="#000" stroke-width="1.2"/>
<ellipse cx="965.3" cy="361.5" rx="2.2" ry="2.8" fill="#fff"/>
<text x="962.0" y="365.1" fill="#14102a" stroke="#14102a" stroke-width="0.45" textLength="6.6" lengthAdjust="spacingAndGlyphs" style="font-size:10px">O</text>
<ellipse cx="989.2" cy="339.7" rx="2.2" ry="2.8" fill="#fff"/>
<text x="985.9" y="343.3" fill="#14102a" stroke="#14102a" stroke-width="0.45" textLength="6.6" lengthAdjust="spacingAndGlyphs" style="font-size:10px">O</text>
<ellipse cx="1012.5" cy="329.0" rx="2.2" ry="2.8" fill="#fff"/>
<text x="1009.2" y="332.6" fill="#14102a" stroke="#14102a" stroke-width="0.45" textLength="6.6" lengthAdjust="spacingAndGlyphs" style="font-size:10px">O</text>
<ellipse cx="1036.5" cy="326.2" rx="2.2" ry="2.8" fill="#fff"/>
<text x="1033.2" y="329.8" fill="#14102a" stroke="#14102a" stroke-width="0.45" textLength="6.6" lengthAdjust="spacingAndGlyphs" style="font-size:10px">O</text>
<ellipse cx="1060.2" cy="324.3" rx="2.2" ry="2.8" fill="#fff"/>
<text x="1056.9" y="327.9" fill="#14102a" stroke="#14102a" stroke-width="0.45" textLength="6.6" lengthAdjust="spacingAndGlyphs" style="font-size:10px">O</text>
<ellipse cx="1084.3" cy="297.8" rx="2.2" ry="2.8" fill="#fff"/>
<text x="1081.0" y="301.4" fill="#14102a" stroke="#14102a" stroke-width="0.45" textLength="6.6" lengthAdjust="spacingAndGlyphs" style="font-size:10px">O</text>
<ellipse cx="1108.3" cy="287.4" rx="2.2" ry="2.8" fill="#fff"/>
<text x="1105.0" y="291.0" fill="#14102a" stroke="#14102a" stroke-width="0.45" textLength="6.6" lengthAdjust="spacingAndGlyphs" style="font-size:10px">O</text>
<ellipse cx="1127.5" cy="287.3" rx="2.2" ry="2.8" fill="#fff"/>
<text x="1124.2" y="290.9" fill="#14102a" stroke="#14102a" stroke-width="0.45" textLength="6.6" lengthAdjust="spacingAndGlyphs" style="font-size:10px">O</text>
<ellipse cx="1150.4" cy="274.4" rx="2.2" ry="2.8" fill="#fff"/>
<text x="1147.1" y="278.0" fill="#14102a" stroke="#14102a" stroke-width="0.45" textLength="6.6" lengthAdjust="spacingAndGlyphs" style="font-size:10px">O</text>
<ellipse cx="1174.5" cy="282.6" rx="2.2" ry="2.8" fill="#fff"/>
<text x="1171.2" y="286.2" fill="#14102a" stroke="#14102a" stroke-width="0.45" textLength="6.6" lengthAdjust="spacingAndGlyphs" style="font-size:10px">O</text>
<rect x="1234" y="181" width="1.5" height="429" fill="#000"/>
<rect x="1235" y="182" width="2.6" height="1" fill="#000"/>
<rect x="1235" y="185" width="2.6" height="1" fill="#000"/>
<rect x="1235" y="187" width="2.6" height="1" fill="#000"/>
<rect x="1235" y="190" width="2.6" height="1" fill="#000"/>
<rect x="1235" y="192" width="2.6" height="1" fill="#000"/>
<rect x="1235" y="195" width="2.6" height="1" fill="#000"/>
<rect x="1235" y="198" width="2.6" height="1" fill="#000"/>
<rect x="1235" y="200" width="5.9" height="1" fill="#000"/>
<rect x="1235" y="203" width="2.6" height="1" fill="#000"/>
<rect x="1235" y="205" width="2.6" height="1" fill="#000"/>
<rect x="1235" y="208" width="2.6" height="1" fill="#000"/>
<rect x="1235" y="210" width="2.6" height="1" fill="#000"/>
<rect x="1235" y="213" width="5.9" height="1" fill="#000"/>
<rect x="1235" y="216" width="2.6" height="1" fill="#000"/>
<rect x="1235" y="218" width="2.6" height="1" fill="#000"/>
<rect x="1235" y="221" width="2.6" height="1" fill="#000"/>
<rect x="1235" y="223" width="2.6" height="1" fill="#000"/>
<rect x="1235" y="226" width="5.9" height="1" fill="#000"/>
<rect x="1235" y="228" width="2.6" height="1" fill="#000"/>
<rect x="1235" y="231" width="2.6" height="1" fill="#000"/>
<rect x="1235" y="234" width="2.6" height="1" fill="#000"/>
<rect x="1235" y="236" width="2.6" height="1" fill="#000"/>
<rect x="1235" y="239" width="5.9" height="1" fill="#000"/>
<rect x="1235" y="241" width="2.6" height="1" fill="#000"/>
<rect x="1235" y="244" width="2.6" height="1" fill="#000"/>
<rect x="1235" y="246" width="2.6" height="1" fill="#000"/>
<rect x="1235" y="249" width="2.6" height="1" fill="#000"/>
<rect x="1235" y="252" width="5.9" height="1" fill="#000"/>
<rect x="1235" y="254" width="2.6" height="1" fill="#000"/>
<rect x="1235" y="257" width="2.6" height="1" fill="#000"/>
<rect x="1235" y="259" width="2.6" height="1" fill="#000"/>
<rect x="1235" y="262" width="2.6" height="1" fill="#000"/>
<rect x="1235" y="264" width="5.9" height="1" fill="#000"/>
<rect x="1235" y="267" width="2.6" height="1" fill="#000"/>
<rect x="1235" y="270" width="2.6" height="1" fill="#000"/>
<rect x="1235" y="272" width="2.6" height="1" fill="#000"/>
<rect x="1235" y="275" width="2.6" height="1" fill="#000"/>
<rect x="1235" y="277" width="5.9" height="1" fill="#000"/>
<rect x="1235" y="280" width="2.6" height="1" fill="#000"/>
<rect x="1235" y="282" width="2.6" height="1" fill="#000"/>
<rect x="1235" y="285" width="2.6" height="1" fill="#000"/>
<rect x="1235" y="288" width="2.6" height="1" fill="#000"/>
<rect x="1235" y="290" width="5.9" height="1" fill="#000"/>
<rect x="1235" y="293" width="2.6" height="1" fill="#000"/>
<rect x="1235" y="295" width="2.6" height="1" fill="#000"/>
<rect x="1235" y="298" width="2.6" height="1" fill="#000"/>
<rect x="1235" y="300" width="2.6" height="1" fill="#000"/>
<rect x="1235" y="303" width="5.9" height="1" fill="#000"/>
<rect x="1235" y="306" width="2.6" height="1" fill="#000"/>
<rect x="1235" y="308" width="2.6" height="1" fill="#000"/>
<rect x="1235" y="311" width="2.6" height="1" fill="#000"/>
<rect x="1235" y="313" width="2.6" height="1" fill="#000"/>
<rect x="1235" y="316" width="5.9" height="1" fill="#000"/>
<rect x="1235" y="318" width="2.6" height="1" fill="#000"/>
<rect x="1235" y="321" width="2.6" height="1" fill="#000"/>
<rect x="1235" y="324" width="2.6" height="1" fill="#000"/>
<rect x="1235" y="326" width="2.6" height="1" fill="#000"/>
<rect x="1235" y="329" width="5.9" height="1" fill="#000"/>
<rect x="1235" y="331" width="2.6" height="1" fill="#000"/>
<rect x="1235" y="334" width="2.6" height="1" fill="#000"/>
<rect x="1235" y="336" width="2.6" height="1" fill="#000"/>
<rect x="1235" y="339" width="2.6" height="1" fill="#000"/>
<rect x="1235" y="342" width="5.9" height="1" fill="#000"/>
<rect x="1235" y="344" width="2.6" height="1" fill="#000"/>
<rect x="1235" y="347" width="2.6" height="1" fill="#000"/>
<rect x="1235" y="349" width="2.6" height="1" fill="#000"/>
<rect x="1235" y="352" width="2.6" height="1" fill="#000"/>
<rect x="1235" y="354" width="5.9" height="1" fill="#000"/>
<rect x="1235" y="357" width="2.6" height="1" fill="#000"/>
<rect x="1235" y="360" width="2.6" height="1" fill="#000"/>
<rect x="1235" y="362" width="2.6" height="1" fill="#000"/>
<rect x="1235" y="365" width="2.6" height="1" fill="#000"/>
<rect x="1235" y="367" width="5.9" height="1" fill="#000"/>
<rect x="1235" y="370" width="2.6" height="1" fill="#000"/>
<rect x="1235" y="372" width="2.6" height="1" fill="#000"/>
<rect x="1235" y="375" width="2.6" height="1" fill="#000"/>
<rect x="1235" y="378" width="2.6" height="1" fill="#000"/>
<rect x="1235" y="380" width="5.9" height="1" fill="#000"/>
<rect x="1235" y="383" width="2.6" height="1" fill="#000"/>
<rect x="1235" y="385" width="2.6" height="1" fill="#000"/>
<rect x="1235" y="388" width="2.6" height="1" fill="#000"/>
<rect x="1235" y="390" width="2.6" height="1" fill="#000"/>
<rect x="1235" y="393" width="5.9" height="1" fill="#000"/>
<rect x="1235" y="396" width="2.6" height="1" fill="#000"/>
<rect x="1235" y="398" width="2.6" height="1" fill="#000"/>
<rect x="1235" y="401" width="2.6" height="1" fill="#000"/>
<rect x="1235" y="403" width="2.6" height="1" fill="#000"/>
<rect x="1235" y="406" width="5.9" height="1" fill="#000"/>
<rect x="1235" y="408" width="2.6" height="1" fill="#000"/>
<rect x="1235" y="411" width="2.6" height="1" fill="#000"/>
<rect x="1235" y="414" width="2.6" height="1" fill="#000"/>
<rect x="1235" y="416" width="2.6" height="1" fill="#000"/>
<rect x="1235" y="419" width="5.9" height="1" fill="#000"/>
<rect x="1235" y="421" width="2.6" height="1" fill="#000"/>
<rect x="1235" y="424" width="2.6" height="1" fill="#000"/>
<rect x="1235" y="426" width="2.6" height="1" fill="#000"/>
<rect x="1235" y="429" width="2.6" height="1" fill="#000"/>
<rect x="1235" y="432" width="5.9" height="1" fill="#000"/>
<rect x="1235" y="434" width="2.6" height="1" fill="#000"/>
<rect x="1235" y="437" width="2.6" height="1" fill="#000"/>
<rect x="1235" y="439" width="2.6" height="1" fill="#000"/>
<rect x="1235" y="442" width="2.6" height="1" fill="#000"/>
<rect x="1235" y="444" width="5.9" height="1" fill="#000"/>
<rect x="1235" y="447" width="2.6" height="1" fill="#000"/>
<rect x="1235" y="450" width="2.6" height="1" fill="#000"/>
<rect x="1235" y="452" width="2.6" height="1" fill="#000"/>
<rect x="1235" y="455" width="2.6" height="1" fill="#000"/>
<rect x="1235" y="457" width="5.9" height="1" fill="#000"/>
<rect x="1235" y="460" width="2.6" height="1" fill="#000"/>
<rect x="1235" y="462" width="2.6" height="1" fill="#000"/>
<rect x="1235" y="465" width="2.6" height="1" fill="#000"/>
<rect x="1235" y="468" width="2.6" height="1" fill="#000"/>
<rect x="1235" y="470" width="5.9" height="1" fill="#000"/>
<rect x="1235" y="473" width="2.6" height="1" fill="#000"/>
<rect x="1235" y="475" width="2.6" height="1" fill="#000"/>
<rect x="1235" y="478" width="2.6" height="1" fill="#000"/>
<rect x="1235" y="480" width="2.6" height="1" fill="#000"/>
<rect x="1235" y="483" width="5.9" height="1" fill="#000"/>
<rect x="1235" y="486" width="2.6" height="1" fill="#000"/>
<rect x="1235" y="488" width="2.6" height="1" fill="#000"/>
<rect x="1235" y="491" width="2.6" height="1" fill="#000"/>
<rect x="1235" y="493" width="2.6" height="1" fill="#000"/>
<rect x="1235" y="496" width="5.9" height="1" fill="#000"/>
<rect x="1235" y="498" width="2.6" height="1" fill="#000"/>
<rect x="1235" y="501" width="2.6" height="1" fill="#000"/>
<rect x="1235" y="504" width="2.6" height="1" fill="#000"/>
<rect x="1235" y="506" width="2.6" height="1" fill="#000"/>
<rect x="1235" y="509" width="5.9" height="1" fill="#000"/>
<rect x="1235" y="511" width="2.6" height="1" fill="#000"/>
<rect x="1235" y="514" width="2.6" height="1" fill="#000"/>
<rect x="1235" y="516" width="2.6" height="1" fill="#000"/>
<rect x="1235" y="519" width="2.6" height="1" fill="#000"/>
<rect x="1235" y="522" width="5.9" height="1" fill="#000"/>
<rect x="1235" y="524" width="2.6" height="1" fill="#000"/>
<rect x="1235" y="527" width="2.6" height="1" fill="#000"/>
<rect x="1235" y="529" width="2.6" height="1" fill="#000"/>
<rect x="1235" y="532" width="2.6" height="1" fill="#000"/>
<rect x="1235" y="534" width="5.9" height="1" fill="#000"/>
<rect x="1235" y="537" width="2.6" height="1" fill="#000"/>
<rect x="1235" y="540" width="2.6" height="1" fill="#000"/>
<rect x="1235" y="542" width="2.6" height="1" fill="#000"/>
<rect x="1235" y="545" width="2.6" height="1" fill="#000"/>
<rect x="1235" y="547" width="5.9" height="1" fill="#000"/>
<rect x="1235" y="550" width="2.6" height="1" fill="#000"/>
<rect x="1235" y="552" width="2.6" height="1" fill="#000"/>
<rect x="1235" y="555" width="2.6" height="1" fill="#000"/>
<rect x="1235" y="558" width="2.6" height="1" fill="#000"/>
<rect x="1235" y="560" width="5.9" height="1" fill="#000"/>
<rect x="1235" y="563" width="2.6" height="1" fill="#000"/>
<rect x="1235" y="565" width="2.6" height="1" fill="#000"/>
<rect x="1235" y="568" width="2.6" height="1" fill="#000"/>
<rect x="1235" y="570" width="2.6" height="1" fill="#000"/>
<rect x="1235" y="573" width="5.9" height="1" fill="#000"/>
<rect x="1235" y="576" width="2.6" height="1" fill="#000"/>
<rect x="1235" y="578" width="2.6" height="1" fill="#000"/>
<rect x="1235" y="581" width="2.6" height="1" fill="#000"/>
<rect x="1235" y="583" width="2.6" height="1" fill="#000"/>
<rect x="1235" y="586" width="5.9" height="1" fill="#000"/>
<rect x="1235" y="588" width="2.6" height="1" fill="#000"/>
<rect x="1235" y="591" width="2.6" height="1" fill="#000"/>
<rect x="1235" y="594" width="2.6" height="1" fill="#000"/>
<rect x="1235" y="596" width="2.6" height="1" fill="#000"/>
<rect x="1235" y="599" width="5.9" height="1" fill="#000"/>
<rect x="1235" y="601" width="2.6" height="1" fill="#000"/>
<rect x="1235" y="604" width="2.6" height="1" fill="#000"/>
<rect x="1235" y="606" width="2.6" height="1" fill="#000"/>
<text x="1269" y="204.9" text-anchor="end" fill="#000">1.405</text>
<text x="1269" y="217.8" text-anchor="end" fill="#000">1.400</text>
<text x="1269" y="230.6" text-anchor="end" fill="#000">1.395</text>
<text x="1269" y="243.5" text-anchor="end" fill="#000">1.390</text>
<text x="1269" y="256.3" text-anchor="end" fill="#000">1.385</text>
<text x="1269" y="269.2" text-anchor="end" fill="#000">1.380</text>
<text x="1269" y="282.1" text-anchor="end" fill="#000">1.375</text>
<text x="1269" y="294.9" text-anchor="end" fill="#000">1.370</text>
<text x="1269" y="307.8" text-anchor="end" fill="#000">1.365</text>
<text x="1269" y="320.6" text-anchor="end" fill="#000">1.360</text>
<text x="1269" y="333.5" text-anchor="end" fill="#000">1.355</text>
<text x="1269" y="346.4" text-anchor="end" fill="#000">1.350</text>
<text x="1269" y="359.2" text-anchor="end" fill="#000">1.345</text>
<text x="1269" y="372.1" text-anchor="end" fill="#000">1.340</text>
<text x="1269" y="384.9" text-anchor="end" fill="#000">1.335</text>
<text x="1269" y="397.8" text-anchor="end" fill="#000">1.330</text>
<text x="1269" y="410.7" text-anchor="end" fill="#000">1.325</text>
<text x="1269" y="423.5" text-anchor="end" fill="#000">1.320</text>
<text x="1269" y="436.4" text-anchor="end" fill="#000">1.315</text>
<text x="1269" y="449.2" text-anchor="end" fill="#000">1.310</text>
<text x="1269" y="462.1" text-anchor="end" fill="#000">1.305</text>
<text x="1269" y="475.0" text-anchor="end" fill="#000">1.300</text>
<text x="1269" y="487.8" text-anchor="end" fill="#000">1.295</text>
<text x="1269" y="500.7" text-anchor="end" fill="#000">1.290</text>
<text x="1269" y="513.5" text-anchor="end" fill="#000">1.285</text>
<text x="1269" y="526.4" text-anchor="end" fill="#000">1.280</text>
<text x="1269" y="539.3" text-anchor="end" fill="#000">1.275</text>
<text x="1269" y="552.1" text-anchor="end" fill="#000">1.270</text>
<text x="1269" y="565.0" text-anchor="end" fill="#000">1.265</text>
<text x="1269" y="577.8" text-anchor="end" fill="#000">1.260</text>
<text x="1269" y="590.7" text-anchor="end" fill="#000">1.255</text>
<rect x="0" y="604" width="1241" height="1" fill="#000"/>
<rect x="1235" y="609" width="6.6" height="1" fill="#000"/>
<rect x="0" y="621" width="1234" height="1" fill="#000"/>
<rect x="-7" y="610" width="1" height="11.5" fill="#000"/>
<text x="-5.6" y="618.8" fill="#000">20</text>
<rect x="17" y="610" width="1" height="11.5" fill="#000"/>
<text x="18.4" y="618.8" fill="#000">27</text>
<rect x="40" y="610" width="1" height="11.5" fill="#000"/>
<text x="41.4" y="618.8" fill="#000">3</text>
<rect x="64" y="610" width="1" height="11.5" fill="#000"/>
<text x="65.4" y="618.8" fill="#000">10</text>
<rect x="88" y="610" width="1" height="11.5" fill="#000"/>
<text x="89.4" y="618.8" fill="#000">17</text>
<rect x="112" y="610" width="1" height="11.5" fill="#000"/>
<text x="113.4" y="618.8" fill="#000">24</text>
<rect x="136" y="610" width="1" height="11.5" fill="#000"/>
<text x="137.4" y="618.8" fill="#000">1</text>
<rect x="159" y="610" width="1" height="11.5" fill="#000"/>
<text x="160.4" y="618.8" fill="#000">8</text>
<rect x="183" y="610" width="1" height="11.5" fill="#000"/>
<text x="184.4" y="618.8" fill="#000">15</text>
<rect x="207" y="610" width="1" height="11.5" fill="#000"/>
<text x="208.4" y="618.8" fill="#000">22</text>
<rect x="231" y="610" width="1" height="11.5" fill="#000"/>
<text x="232.4" y="618.8" fill="#000">29</text>
<rect x="255" y="610" width="1" height="11.5" fill="#000"/>
<text x="256.4" y="618.8" fill="#000">5</text>
<rect x="278" y="610" width="1" height="11.5" fill="#000"/>
<text x="279.4" y="618.8" fill="#000">12</text>
<rect x="302" y="610" width="1" height="11.5" fill="#000"/>
<text x="303.4" y="618.8" fill="#000">19</text>
<rect x="326" y="610" width="1" height="11.5" fill="#000"/>
<text x="327.4" y="618.8" fill="#000">26</text>
<rect x="350" y="610" width="1" height="11.5" fill="#000"/>
<text x="351.4" y="618.8" fill="#000">2</text>
<rect x="374" y="610" width="1" height="11.5" fill="#000"/>
<text x="375.4" y="618.8" fill="#000">9</text>
<rect x="398" y="610" width="1" height="11.5" fill="#000"/>
<text x="399.4" y="618.8" fill="#000">16</text>
<rect x="422" y="610" width="1" height="11.5" fill="#000"/>
<text x="423.4" y="618.8" fill="#000">23</text>
<rect x="446" y="610" width="1" height="11.5" fill="#000"/>
<text x="447.4" y="618.8" fill="#000">30</text>
<rect x="469" y="610" width="1" height="11.5" fill="#000"/>
<text x="470.4" y="618.8" fill="#000">7</text>
<rect x="493" y="610" width="1" height="11.5" fill="#000"/>
<text x="494.4" y="618.8" fill="#000">14</text>
<rect x="516" y="610" width="1" height="11.5" fill="#000"/>
<text x="517.4" y="618.8" fill="#000">21</text>
<rect x="540" y="610" width="1" height="11.5" fill="#000"/>
<text x="541.4" y="618.8" fill="#000">28</text>
<rect x="563" y="610" width="1" height="11.5" fill="#000"/>
<text x="564.4" y="618.8" fill="#000">4</text>
<rect x="588" y="610" width="1" height="11.5" fill="#000"/>
<text x="589.4" y="618.8" fill="#000">11</text>
<rect x="612" y="610" width="1" height="11.5" fill="#000"/>
<text x="613.4" y="618.8" fill="#000">18</text>
<rect x="636" y="610" width="1" height="11.5" fill="#000"/>
<text x="637.4" y="618.8" fill="#000">25</text>
<rect x="660" y="610" width="1" height="11.5" fill="#000"/>
<text x="661.4" y="618.8" fill="#000">2</text>
<rect x="684" y="610" width="1" height="11.5" fill="#000"/>
<text x="685.4" y="618.8" fill="#000">9</text>
<rect x="707" y="610" width="1" height="11.5" fill="#000"/>
<text x="708.4" y="618.8" fill="#000">16</text>
<rect x="731" y="610" width="1" height="11.5" fill="#000"/>
<text x="732.4" y="618.8" fill="#000">23</text>
<rect x="755" y="610" width="1" height="11.5" fill="#000"/>
<text x="756.4" y="618.8" fill="#000">30</text>
<rect x="774" y="610" width="1" height="11.5" fill="#000"/>
<text x="775.4" y="618.8" fill="#000">6</text>
<rect x="798" y="610" width="1" height="11.5" fill="#000"/>
<text x="799.4" y="618.8" fill="#000">13</text>
<rect x="822" y="610" width="1" height="11.5" fill="#000"/>
<text x="823.4" y="618.8" fill="#000">20</text>
<rect x="846" y="610" width="1" height="11.5" fill="#000"/>
<text x="847.4" y="618.8" fill="#000">27</text>
<rect x="869" y="610" width="1" height="11.5" fill="#000"/>
<text x="870.4" y="618.8" fill="#000">3</text>
<rect x="893" y="610" width="1" height="11.5" fill="#000"/>
<text x="894.4" y="618.8" fill="#000">10</text>
<rect x="917" y="610" width="1" height="11.5" fill="#000"/>
<text x="918.4" y="618.8" fill="#000">17</text>
<rect x="941" y="610" width="1" height="11.5" fill="#000"/>
<text x="942.4" y="618.8" fill="#000">24</text>
<rect x="965" y="610" width="1" height="11.5" fill="#000"/>
<text x="966.4" y="618.8" fill="#000">3</text>
<rect x="989" y="610" width="1" height="11.5" fill="#000"/>
<text x="990.4" y="618.8" fill="#000">10</text>
<rect x="1012" y="610" width="1" height="11.5" fill="#000"/>
<text x="1013.4" y="618.8" fill="#000">17</text>
<rect x="1036" y="610" width="1" height="11.5" fill="#000"/>
<text x="1037.4" y="618.8" fill="#000">24</text>
<rect x="1060" y="610" width="1" height="11.5" fill="#000"/>
<text x="1061.4" y="618.8" fill="#000">31</text>
<rect x="1084" y="610" width="1" height="11.5" fill="#000"/>
<text x="1085.4" y="618.8" fill="#000">7</text>
<rect x="1108" y="610" width="1" height="11.5" fill="#000"/>
<text x="1109.4" y="618.8" fill="#000">14</text>
<rect x="1127" y="610" width="1" height="11.5" fill="#000"/>
<text x="1128.4" y="618.8" fill="#000">21</text>
<rect x="1150" y="610" width="1" height="11.5" fill="#000"/>
<text x="1151.4" y="618.8" fill="#000">28</text>
<rect x="1173" y="610" width="1" height="11.5" fill="#000"/>
<text x="1174.4" y="618.8" fill="#000">5</text>
<rect x="1198" y="610" width="1" height="11.5" fill="#000"/>
<text x="1199.4" y="618.8" fill="#000">12</text>
<rect x="1222" y="610" width="1" height="11.5" fill="#000"/>
<text x="1223.4" y="618.8" fill="#000">19</text>
<rect x="40" y="610" width="1" height="22" fill="#000"/>
<text x="41.4" y="630.8" fill="#000">June</text>
<rect x="136" y="610" width="1" height="22" fill="#000"/>
<text x="137.4" y="630.8" fill="#000">July</text>
<rect x="245" y="610" width="1" height="22" fill="#000"/>
<text x="246.4" y="630.8" fill="#000">August</text>
<rect x="350" y="610" width="1" height="22" fill="#000"/>
<text x="351.4" y="630.8" fill="#000">September</text>
<rect x="450" y="610" width="1" height="22" fill="#000"/>
<text x="451.4" y="630.8" fill="#000">October</text>
<rect x="560" y="610" width="1" height="22" fill="#000"/>
<text x="561.4" y="630.8" fill="#000">November</text>
<rect x="660" y="610" width="1" height="22" fill="#000"/>
<text x="661.4" y="630.8" fill="#000">December</text>
<rect x="765" y="610" width="1" height="22" fill="#000"/>
<text x="766.4" y="630.8" fill="#000">2014</text>
<rect x="869" y="610" width="1" height="22" fill="#000"/>
<text x="870.4" y="630.8" fill="#000">February</text>
<rect x="965" y="610" width="1" height="22" fill="#000"/>
<text x="966.4" y="630.8" fill="#000">March</text>
<rect x="1065" y="610" width="1" height="22" fill="#000"/>
<text x="1066.4" y="630.8" fill="#000">April</text>
<rect x="1165" y="610" width="1" height="22" fill="#000"/>
<text x="1166.4" y="630.8" fill="#000">May</text>
<rect x="63.8" y="0" width="1.5" height="604" fill="#0a960a"/>
<rect x="1187.7" y="0" width="1.4" height="609" fill="#f00000"/>
</svg></body></html>
